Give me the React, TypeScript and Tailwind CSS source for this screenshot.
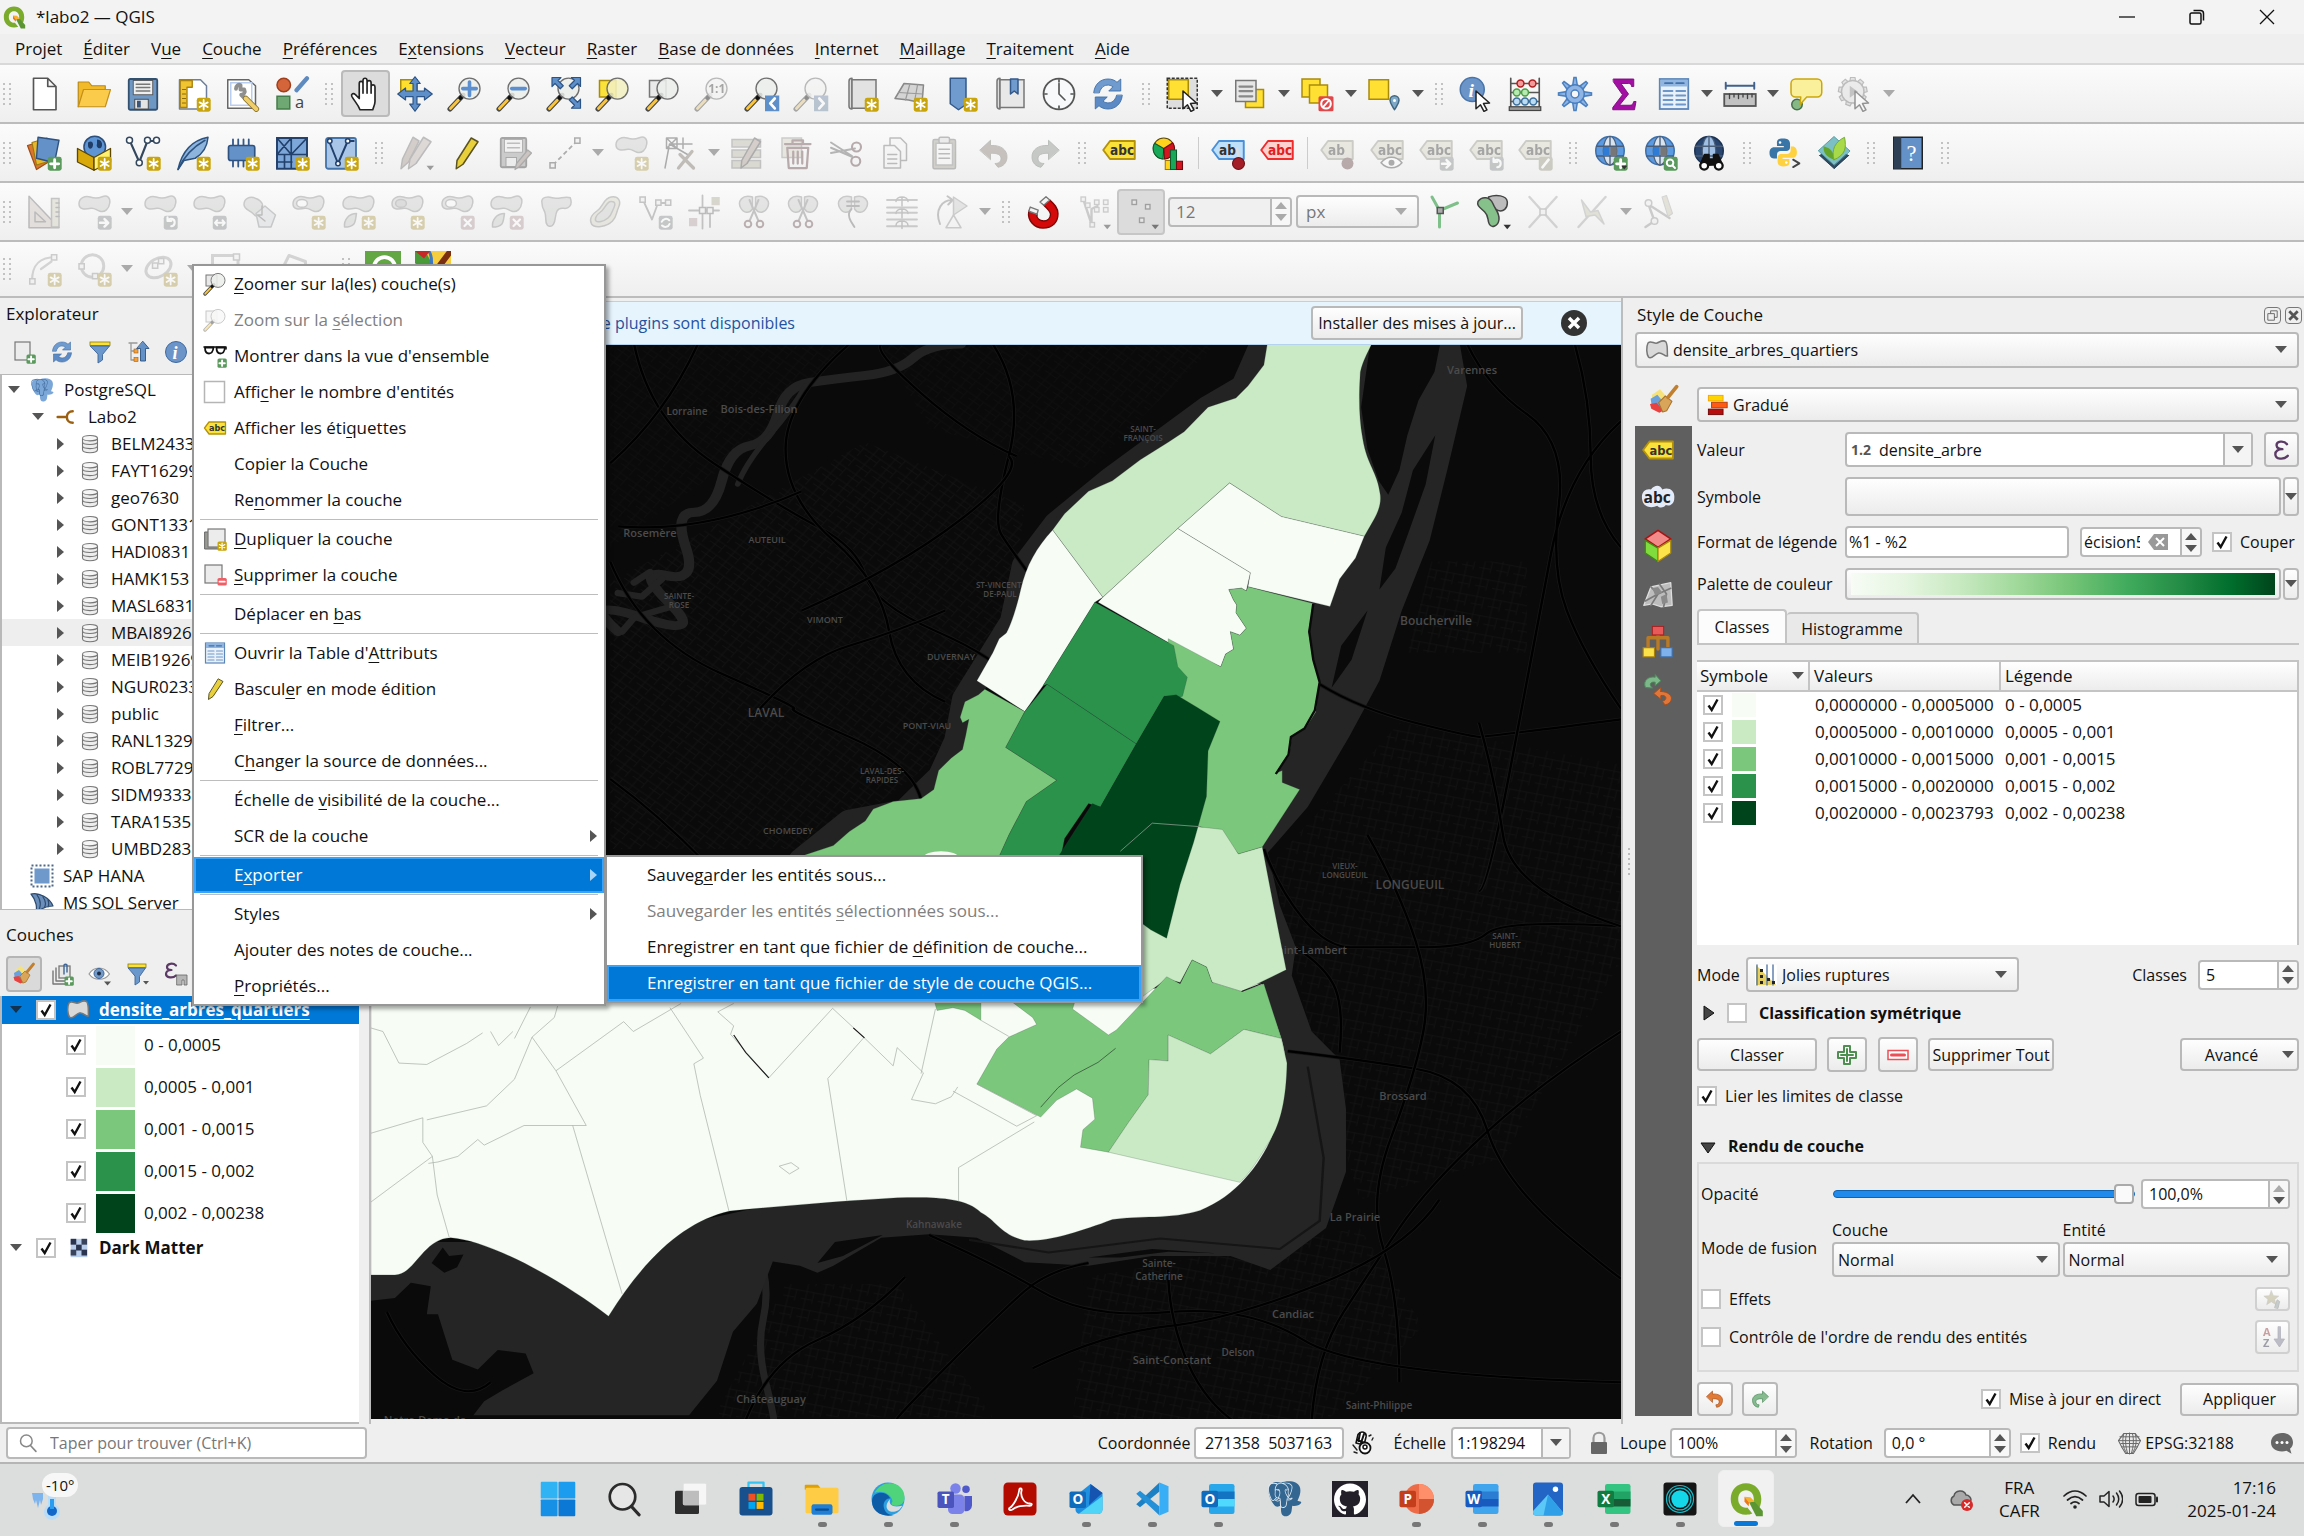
import React, { useId } from "react";
import type { ReactNode } from "react";
import { SiPostgresql, SiGithub } from "react-icons/si";

/* ---------- drawing helpers (24 unit grid) ---------- */

const p = (d: string, fill = "none", stroke = "none", w = 1) => (
  <path d={d} fill={fill} stroke={stroke} strokeWidth={w} strokeLinejoin="round" strokeLinecap="round" />
);
const r = (x: number, y: number, w: number, h: number, fill = "none", stroke = "none", sw = 1, rx = 0) => (
  <rect x={x} y={y} width={w} height={h} fill={fill} stroke={stroke} strokeWidth={sw} rx={rx} />
);
const c = (cx: number, cy: number, rad: number, fill = "none", stroke = "none", sw = 1) => (
  <circle cx={cx} cy={cy} r={rad} fill={fill} stroke={stroke} strokeWidth={sw} />
);

const star = (
  <>
    {r(14.5, 14.5, 9.3, 9.3, "#c8a40d", "none", 0, 1.6)}
    {p("M19.1 16v6.3M16.4 17.6l5.4 3.1M16.4 20.7l5.4-3.1", "none", "#fff", 1.2)}
  </>
);
const plusBadge = (
  <>
    {r(14.5, 14.5, 9.3, 9.3, "#5a9a5c", "none", 0, 1.6)}
    {p("M19.1 16.5v5.4M16.4 19.2h5.4", "none", "#fff", 1.9)}
  </>
);
const grayBadge = (inner: ReactNode, fill = "#8b9296") => (
  <>
    {r(14.5, 14.5, 9.3, 9.3, fill, "none", 0, 1.6)}
    {inner}
  </>
);
const handle = (
  <>
    {p("M10.5 13L2 22", "none", "#4a4a4a", 3.4)}
    {p("M7.5 16.2L2.3 21.7", "none", "#fbc53c", 1.9)}
    {p("M11 12.5l-2 2.1", "none", "#111", 2.6)}
  </>
);
const lens = (fill = "#eceeea") => <circle cx="15" cy="8.4" r="7" fill={fill} fillOpacity="0.88" stroke="#6f6f6f" strokeWidth="0.9" />;
const blob = p("M2 6.500C2 2.500 6 1 9.500 2c3.500 1.200 5.500.8 8-.2 3.400-1.300 5.500.6 5 4.200-.5 4-3.300 6.500-6.500 5.500-2.600-.8-3.500-2.500-6-2-4.200.9-8 1-8-3z", "#c9cfc9", "#8f948f", 1);
const label = (fill: string, stroke: string, text: string, color: string) => (
  <>
    {p("M6 4h16.500v12H6L1.500 10z", fill, stroke, 1.3)}
    <text x="6" y="13.2" fontSize="9" fontWeight="700" fill={color} fontFamily="DejaVu Sans Condensed, Open Sans, sans-serif">{text}</text>
  </>
);
const pencil = p("M15.5 2l4.5 2.5L10 19.5 5.5 22.5 6 17z", "#e8cf3c", "#5b5320", 1);
const cursor = p("M12 10l9 8-4 .4 2.3 4.2-2 1L15 19.2l-3 2.6z", "#fff", "#222", 1);
const magIcon = (extra: ReactNode, fill?: string) => (
  <>
    {handle}
    {lens(fill)}
    {extra}
  </>
);
const refresh = (
  <>
    {p("M2.5 11C3 5.5 7 2 12 2c2.5 0 4.5.8 6 2.2L20.5 2v8h-8l2.8-2.8C13 5.5 9.5 5.7 7.8 8 7 9 6.5 10 6.3 11z", "#6f9bcf", "#3f6fa8", 0.6)}
    {p("M21.5 13c-.5 5.500-4.500 9-9.500 9-2.500 0-4.500-.8-6-2.200L3.500 22v-8h8l-2.800 2.800c2.300 1.700 5.800 1.500 7.500-.8.8-1 1.300-2 1.500-3z", "#5c8ac4", "#3f6fa8", 0.6)}
  </>
);
const globe = (dark = false) => (
  <>
    {c(12, 10.5, 9.5, dark ? "#27456e" : "#5b9ae0", dark ? "#1c3252" : "#3d70ad")}
    <ellipse cx="12" cy="10.5" rx="4.5" ry="9.5" fill={dark ? "#9fc0e4" : "#d9e3ee"} stroke="#4a5e78" strokeWidth="0.8" />
    {p("M12 1v19M3 7.500h18M3 14h18", "none", "#4a5e78", 0.9)}
    {!dark && r(7.5, 8, 4, 6, "#2f7cd6")}
    {!dark && r(12.5, 8, 4, 6, "#777")}
  </>
);
const book = p("M4 3.5C4 2 5 1.5 6 1.5V22c-1 0-2-.5-2-1.800z", "#ddd", "#777", 1);

const qgisLogo = (
  <>
    <path d="M12 1.5C6 1.5 1.8 6 1.8 12S6 22.5 12 22.5c1.700 0 3-.3 4.200-.8l-3.300-4c-.3.100-.6.100-.9.100-3.200 0-5.200-2.600-5.200-5.800S8.8 6.2 12 6.2s5.200 2.600 5.200 5.800c0 .7-.1 1.400-.3 2l4 3.800c.9-1.700 1.300-3.700 1.300-5.800 0-6-4.200-10.500-10.200-10.500z" fill="#7aab2a" />
    {p("M14 14.2l3.8-.4 5.4 6.2v3.500h-4.400z", "#5c9632")}
    {p("M11 10.5l4 .3 2.8 3-3.8.4z", "#f5b02e")}
    {p("M11 10.5l3 3.700-.2 2.600-2.800-3z", "#ee7913")}
  </>
);

const brush = (
  <>
    {p("M3 8l6-4 7 8-8 9-5-3z", "#f7e27a")}
    {p("M2 11l5-3 5 6-3 4-6 0z", "#6aa0dc")}
    {p("M1.5 15l5-1 5 6-3 1.500-6-3z", "#e8413f")}
    {p("M8 14l5-5 5 4-4 7-3 1z", "#d8a55a", "#a8742c", 0.8)}
    {p("M15 10l6.500-8", "none", "#c08030", 2.8)}
  </>
);

const ICONS: Record<string, ReactNode> = {
  page: p("M5 1.500h9.500L20 7v15.500H5zM14.500 1.500V7H20", "#fff", "#555", 1.1),
  folder: (
    <>
      {p("M1.500 20.500V4h7l2 2.500h9V10", "#f2b928", "#b98a16", 0.8)}
      {p("M1.500 20.500L5 9h18l-3.500 11.500z", "#fbcb4b", "#c4901a", 0.8)}
    </>
  ),
  save: (
    <>
      {r(2.5, 2, 19, 20.5, "#6e97c4", "#33506f", 1.2, 1)}
      {r(5.5, 3, 13, 9.5, "#eee", "#555", 0.6)}
      {p("M7.500 5.500h9M7.500 7.700h9M7.500 10h9", "none", "#777", 1)}
      {r(6.5, 15.5, 9, 6.5, "#e4e4e4", "#444", 0.6)}
      {r(8, 16.5, 2.5, 4.5, "#3a567a")}
    </>
  ),
  layout: (
    <>
      {p("M3 2.500h14l4 4V22H3z", "#fff", "#6d7f9c")}
      {p("M3.500 3h8v4.500H8V21H3.500z", "#f0c330", "#a8810f", 0.9)}
      {p("M5 9h2M5 12h2M5 15h2M5 18h2", "none", "#8a6a0b", 0.8)}
      {star}
    </>
  ),
  wrench: (
    <>
      {p("M2.500 2.500h14l4.500 4V21.500H2.500z", "#fff", "#666")}
      {r(4.5, 4.5, 14, 15, "none", "#b8cdf0", 1)}
      {p("M8 8.500c0-2 1.500-3 3-2.500v3h2.500c1 2-.5 3.500-2 3.500l4 4", "none", "#8f8f8f", 2.6)}
      {p("M14.500 15l7 7", "none", "#8a7430", 3.8)}
      {p("M14.500 15l7 7", "none", "#f0cf6a", 2.6)}
    </>
  ),
  styles: (
    <>
      {c(6.5, 6, 4.5, "#d4653b", "#9f3f1c")}
      {p("M15 9.500l7-8", "none", "#5e8bbf", 2.8)}
      {r(2, 13.5, 8.5, 8.5, "#6fa873", "#447d49")}
      <text x="14" y="21.5" fontSize="11" fill="#444" fontFamily="Open Sans, sans-serif">a</text>
    </>
  ),
  hand: p("M8 22.500c-1.500-4-4-6-5.500-9-.6-1.500 1.200-2.400 2.300-1.200L7.500 15V5c0-1.900 2.400-1.900 2.500 0V3c.1-2 2.600-2 2.700 0v1.500c.1-1.900 2.600-1.900 2.700 0V7c.3-1.600 2.600-1.400 2.600.3V17c0 2-1 3.500-1.500 5.500zM10 5v6.500M12.700 4.500v7M15.400 6.500v5", "#fff", "#222", 1.1),
  pan: (
    <>
      {r(2.5, 2.5, 11, 11, "#ffdf2e", "#a98b0c")}
      {p("M12 .5l3.500 4.500H13.300v5h5V8L23.500 12 18.300 16v-2.300h-5v5h2.200L12 23.500 8.500 18.700h2.200v-5h-5V16L.5 12 5.700 8v2h5V5H8.500z", "#5f8fc9", "#2d5486", 0.8)}
    </>
  ),
  zoomIn: magIcon(p("M15 4v9M10.500 8.400h9", "none", "#5b8fd0", 2.4)),
  zoomOut: magIcon(p("M10.500 8.400h9", "none", "#5b8fd0", 2.4)),
  zoomFull: (
    <>
      {magIcon(null)}
      {p("M4 1h6L8 3l3.500 3.500-2 2L6 5 4 7zM23 1v6l-2-2-3.500 3.500-2-2L19 3l-2-2zM23 21.500h-6l2-2-3.500-3.500 2-2L21 17.500l2-2z", "#5f8fc9", "#2d5486", 0.8)}
    </>
  ),
  zoomSel: (
    <>
      {r(3, 3, 11, 11, "#fbe23a", "#a98b0c")}
      {magIcon(null, "#f2f0c0")}
    </>
  ),
  zoomLayer: (
    <>
      {r(3, 3, 11, 11, "#e9e9e9", "#777")}
      {magIcon(null)}
    </>
  ),
  zoomNative: (
    <>
      {magIcon(null)}
      <text x="9.5" y="11.5" fontSize="8" fontWeight="700" fill="#444" fontFamily="Open Sans, sans-serif">1:1</text>
    </>
  ),
  zoomLast: (
    <>
      {magIcon(null)}
      {r(14, 13, 9.5, 10.5, "#5f8fc9")}
      {p("M20.500 15l-3 3.300 3 3.300", "none", "#fff", 1.8)}
    </>
  ),
  zoomNext: (
    <>
      {magIcon(null)}
      {r(14, 13, 9.5, 10.5, "#5f8fc9")}
      {p("M17.500 15l3 3.300-3 3.300", "none", "#fff", 1.8)}
    </>
  ),
  newMap: (
    <>
      {book}
      {r(6, 2.5, 16, 19, "#e2e2e2", "#777")}
      {star}
    </>
  ),
  map3d: (
    <>
      {p("M2 15L8 5l13 1-1 12-9-2z", "#d4d4d4", "#888")}
      {p("M4.500 11l16 1M12 5l-3 11M17 6l-2 11", "none", "#999", 0.8)}
      {star}
    </>
  ),
  bookmarkNew: (
    <>
      {p("M5.500 1.500h10.500V19l-5 3.500-5.500-4z", "#6f9bcf", "#33588a")}
      {star}
    </>
  ),
  bookmarks: (
    <>
      {book}
      {r(6, 2.5, 16, 18.5, "#e8e8e8", "#777")}
      {p("M13 2h5v10l-2.500-2-2.500 2z", "#6f9bcf", "#33588a")}
    </>
  ),
  clock: (
    <>
      {c(12, 12, 10.3, "#f7f9fb", "#555", 1.2)}
      {p("M12 5v7l4 4M12 2.500v1.500M12 20v1.500M2.500 12H4M20 12h1.500", "none", "#555", 1.1)}
    </>
  ),
  refresh,
  select: (
    <>
      <rect x="1.5" y="1.5" width="20" height="20" fill="#dedede" stroke="#333" strokeWidth="1" strokeDasharray="2 1" />
      {r(2.5, 2.5, 13, 13, "#ffe033", "#a98b0c")}
      {cursor}
    </>
  ),
  form: (
    <>
      {r(9, 9, 12, 12, "#ffe033", "#a98b0c")}
      {r(2.5, 3, 13.5, 14, "#e6e6e6", "#777")}
      {p("M5 7h8.500M5 10h8.500M5 13.500h8.500", "none", "#888", 1.5)}
    </>
  ),
  deselect: (
    <>
      {r(2, 2, 12, 12, "#ffe033", "#a98b0c")}
      {r(7, 6, 12, 12, "#ffe033", "#a98b0c")}
      {r(13, 13.5, 10, 10, "#e0474a", "none", 0, 1)}
      {c(18, 18.5, 3.2, "none", "#fff", 1.4)}
      {p("M16 20.700l4-4.400", "none", "#fff", 1.2)}
    </>
  ),
  selectLoc: (
    <>
      {r(2, 2.5, 13, 13, "#ffe033", "#a98b0c")}
      {p("M19 22.500c-2-3.500-3-4.500-3-6.300a3 3 0 0 1 6 0c0 1.800-1 2.800-3 6.300z", "#7fa9c6", "#3f6782")}
      {c(19, 16.3, 1, "#fff")}
    </>
  ),
  identify: (
    <>
      {c(9.5, 9, 8, "#6b95c9", "#4a75aa")}
      <text x="7" y="14" fontSize="13" fontStyle="italic" fontWeight="700" fill="#fff" fontFamily="Liberation Serif, serif">i</text>
      {cursor}
    </>
  ),
  abacus: (
    <>
      {p("M2.500 1.500v20M21.500 1.500v20M2.500 5h19M2.500 11h19M2.500 17h19", "none", "#555", 1.1)}
      {r(1.5, 20.5, 21, 2.5, "#999", "#444", 0.8)}
      {[9, 17].map((x) => <circle key={x} cx={x} cy="5" r="2.3" fill="#f39a9a" stroke="#b02020" />)}
      {[6.5, 12].map((x) => <circle key={x} cx={x} cy="11" r="2.3" fill="#b6eab0" stroke="#4d9d48" />)}
      {[6.5, 12, 17.5].map((x) => <circle key={x} cx={x} cy="17" r="2.3" fill="#bcdcf3" stroke="#3b6f9c" />)}
    </>
  ),
  gear: (
    <>
      {[0, 45, 90, 135, 180, 225, 270, 315].map((a) => (
        <path key={a} d="M10.500 6L11.300 1h1.400L13.500 6z" fill="#8db4e4" stroke="#4a7fc0" strokeWidth="1" transform={`rotate(${a} 12 12)`} />
      ))}
      {c(12, 12, 6.2, "#8db4e4", "#4a7fc0")}
      {c(12, 12, 2.6, "#f6f6f6", "#4a7fc0")}
    </>
  ),
  sigma: p("M5 2h13.500v5h-1.500c0-1.500-.8-2-2-2H10l5 7-6 7.500h7c1.500 0 2-.8 2.500-2.500H20L19 22.500H4.500V21L11 12.500 5 4z", "#a30ea3", "#7a0a7a", 0.6),
  table: (
    <>
      {r(2.5, 2, 19, 20, "#e9f1fa", "#5c86b8", 1.2)}
      {r(3, 2.5, 18, 4.5, "#8fb5e0")}
      {p("M5 10h6M13.500 10h6M5 13h6M13.500 13h6M5 16h6M13.500 16h6M5 19h6M13.500 19h6", "none", "#6d97c8", 1.2)}
      {p("M6 4.800h5M13.500 4.800h5", "none", "#4272aa", 1.2)}
    </>
  ),
  ruler: (
    <>
      {p("M2.500 6.500h19M2.500 4.500v4M21.500 4.500v4", "none", "#41618a", 1.3)}
      {r(1.5, 12, 21, 8, "#c2c2c2", "#555", 1.2)}
      {p("M5 12v3M8 12v2M11 12v3M14 12v2M17 12v3M20 12v2", "none", "#444", 0.9)}
    </>
  ),
  tip: (
    <>
      {c(6, 19, 3.5, "#86b886", "#45704a")}
      {p("M5 2h14.500a3 3 0 0 1 3 3v6a3 3 0 0 1-3 3h-7L8 19l.5-5H5a3 3 0 0 1-3-3V5a3 3 0 0 1 3-3z", "#faef9a", "#c9a70d", 1)}
    </>
  ),
  action: (
    <>
      {[0, 40, 80, 120, 160, 200, 240, 280, 320].map((a) => (
        <path key={a} d="M8.500 4L9 1h3l.5 3z" fill="#ccc" stroke="#777" strokeWidth="0.8" transform={`rotate(${a} 10.5 10.5)`} />
      ))}
      {c(10.5, 10.5, 7.5, "#ddd", "#777")}
      {p("M8.500 6.500l5.500 4-5.500 4z", "#888")}
      {cursor}
    </>
  ),
  dataSource: (
    <>
      {p("M1 7l10-3 4 14-8 5z", "#d9762f", "#9c4d16", 0.8)}
      {p("M4 5l10-3 3 15-10 3z", "#e8b82c", "#9c7a10", 0.8)}
      {p("M8 1.500l14 2-3 15-12-3z", "#6391c8", "#2d527f", 0.9)}
      {plusBadge}
    </>
  ),
  geopackage: (
    <>
      {c(12.5, 8, 7.2, "#5e95d4", "#2c4f7d")}
      {p("M8 5c3-2 4 1 3 3s-3 1-3-1zM14 3c3 0 4 3 3 5s-4 0-3-2z", "#1f3d66")}
      {p("M1 9l11 6v8.500L1 18z", "#d9a90b", "#5c4804", 0.9)}
      {p("M23 9l-11 6v8.500L23 18z", "#fff16e", "#5c4804", 0.9)}
      {star}
    </>
  ),
  vNew: (
    <>
      {p("M3.500 4.500L9.500 18 15 4h5", "none", "#33475e", 1.4)}
      {c(3, 3.5, 2, "#fff", "#33475e")}
      {c(15, 3.5, 2, "#fff", "#33475e")}
      {c(21, 3.5, 2, "#fff", "#33475e")}
      {c(9.5, 18.5, 2, "#fff", "#33475e")}
      {star}
    </>
  ),
  feather: (
    <>
      {p("M2 23C4 14 9 4 22 1.500c-.5 6-3.500 11-8.500 14L6 17z", "#8db4dd", "#2c5280", 1)}
      {p("M2 23C6 14 12 8 20 3.500", "none", "#2c5280", 1)}
      {star}
    </>
  ),
  chip: (
    <>
      {p("M6 3v18M9.500 3v18M13 3v18M16.500 3v18", "none", "#33588a", 1.2)}
      {r(3, 7, 17.5, 10, "#6391c8", "#2d527f", 1.1, 1.5)}
      {star}
    </>
  ),
  mesh: (
    <>
      {r(2, 2, 20, 20.5, "#7da7d8", "#21406b", 1.3)}
      {p("M2 13h20M11.500 2v20M2 2l9.500 11M11.500 2L2 13M11.500 13L22 2M2 18h10M7 13v9", "none", "#21406b", 1.1)}
      {star}
    </>
  ),
  vMesh: (
    <>
      {r(2, 2, 20, 20.5, "#a9c6e8", "#4373a8", 1.2, 1.5)}
      {p("M4 4l6 15 6.500-15h4", "none", "#21406b", 1.3)}
      {c(4.5, 4, 1.5, "#fff", "#21406b")}
      {c(16.5, 4, 1.5, "#fff", "#21406b")}
      {c(10, 19, 1.5, "#fff", "#21406b")}
      {star}
    </>
  ),
  pencils: (
    <>
      {p("M10 1.500l4 2.500L7 18l-5 4.500L3 16z", "#b59a8c", "#777")}
      {p("M17 1.500l5 3L12 19l-5 3.500L8 16z", "#c9b3a8", "#777")}
      {p("M19 20.500h5l-2.500 3z", "#333")}
    </>
  ),
  pencil,
  saveEdit: (
    <>
      {r(2.5, 2, 17, 19.5, "#9a9a9a", "#444", 1.2, 1)}
      {r(5, 3, 12, 8.5, "#eee", "#555", 0.6)}
      {p("M7 5.500h8M7 8.500h8", "none", "#777", 1)}
      {r(6, 15, 7, 6, "#e4e4e4", "#444", 0.6)}
      {p("M20.500 10l2.500 2-8 9-3 2 1-4z", "#a88778", "#555", 0.8)}
    </>
  ),
  segment: (
    <>
      <path d="M4 20L20 4" stroke="#555" strokeWidth="1.2" strokeDasharray="3 2" />
      {r(2, 18.5, 3.5, 3.5, "#eee", "#555")}
      {r(18.5, 2, 3.5, 3.5, "#eee", "#555")}
    </>
  ),
  blobNew: (
    <>
      {blob}
      {star}
    </>
  ),
  vertexTool: (
    <>
      {p("M2 22L5 6h15M5 6l12 7M3 2h7v7H3zM3 2l7 7M10 2l-7 7M14 2v7", "none", "#555", 1)}
      {p("M20 11l-9 11M12 13l9 9", "none", "#8a7a66", 2.2)}
    </>
  ),
  multiEdit: (
    <>
      {r(2, 3, 19, 5, "#bdbb9c", "#888")}
      {r(2, 10, 19, 5, "#bdbb9c", "#888")}
      {r(2, 17, 19, 5, "#bdbb9c", "#888")}
      {p("M17 2l4 2.500L12 19l-4 3 .5-5z", "#b99a8c", "#555")}
    </>
  ),
  trash: (
    <>
      {r(2, 2, 13, 13, "#d9d4b4", "#999")}
      {p("M4 6h17M9 6V3.500h7V6M5.500 8.500h14L18.500 22h-12zM9.500 11v8M12.500 11v8M15.500 11v8", "none", "#8a4a52", 1.5)}
    </>
  ),
  cut: (
    <>
      {p("M2 5l14 9M2 12l16-3M2 8.500l14 6", "none", "#666", 1.3)}
      {c(19, 8, 3, "none", "#7d4a52", 1.4)}
      {c(18.5, 17.5, 3, "none", "#7d4a52", 1.4)}
    </>
  ),
  copy: (
    <>
      {p("M8 2h7l4 4v11H8z", "#f4f4f4", "#777")}
      {p("M4 7h7l4 4v11H4zM6.500 13h6M6.500 16h6M6.500 19h6", "#f4f4f4", "#777")}
    </>
  ),
  paste: (
    <>
      {r(4, 3, 15, 19.5, "#aaa68c", "#777", 1, 1)}
      {r(6, 5.5, 11, 14.5, "#f6f6f6", "#888")}
      {r(8, 1.5, 7, 4, "#ddd", "#777", 1, 1)}
      {p("M8 9.500h7M8 12.500h7M8 15.500h7", "none", "#777")}
    </>
  ),
  undo: p("M2 10l7-6.500V7c7-.5 11 3 11 7.500 0 4-2.500 6.500-6 7l-2-2.500c3 0 4-1.500 4-3.500 0-2.300-2.500-3.500-7-3.300v4z", "#9a8272", "#776", 0.6),
  redo: p("M22 10l-7-6.500V7C8 6.500 4 10 4 14.500c0 4 2.500 6.500 6 7l2-2.500c-3 0-4-1.500-4-3.500 0-2.300 2.500-3.500 7-3.300v4z", "#8a958a", "#676", 0.6),
  labelYellow: label("#fbe23a", "#b5920b", "abc", "#333"),
  labelMid: <g transform="translate(0 2)">{label("#fbe23a", "#b5920b", "abc", "#333")}</g>,
  diagram: (
    <>
      {c(8.5, 9, 7, "#ffd21e", "#5a4a10", 0.7)}
      {p("M8.500 9L2.400 5.500A7 7 0 0 0 8 16z", "#18a858", "#0c5c30", 0.7)}
      {p("M8.500 9l6-3.800A7 7 0 0 1 9 16z", "#d4141e", "#6d0a10", 0.7)}
      {r(9.5, 17, 4, 6, "#ffd21e", "#9c7a0a", 0.7)}
      {r(13, 10, 4, 13, "#18a858", "#0c5c30", 0.7)}
      {r(17, 17.5, 4, 5.5, "#d4141e", "#6d0a10", 0.7)}
    </>
  ),
  labelPin: (
    <>
      {label("#bfe0fa", "#4a90d9", "ab", "#333")}
      {p("M18 9l1.500 8", "none", "#ddd", 1.5)}
      {c(19, 19, 4, "#a31e26", "#6d1016", 0.7)}
    </>
  ),
  labelRed: label("#ffd0d0", "#ef2b2b", "abc", "#e02020"),
  labelGrayPin: (
    <>
      {label("#d9d6b8", "#9c9a80", "ab", "#444")}
      {c(19, 19, 4, "#8a4a52")}
    </>
  ),
  labelEye: (
    <>
      {label("#d9d6b8", "#9c9a80", "abc", "#444")}
      {p("M8 18.500c4-5 10-5 14 0-4 4.500-10 4.500-14 0z", "#fff", "#555")}
      {c(15, 18.5, 2, "#555")}
    </>
  ),
  labelMove: (
    <>
      {label("#d9d6b8", "#9c9a80", "abc", "#444")}
      {grayBadge(p("M16 19.200h5M19 16.700l2.500 2.500-2.500 2.500", "none", "#fff", 1.6))}
    </>
  ),
  labelRotate: (
    <>
      {label("#d9d6b8", "#9c9a80", "abc", "#444")}
      {grayBadge(p("M17 18a2.500 2.500 0 1 1 2.500 3.500M17 15.500V18h2.500", "none", "#fff", 1.4))}
    </>
  ),
  labelEdit: (
    <>
      {label("#d9d6b8", "#9c9a80", "abc", "#444")}
      {grayBadge(p("M21 16.500l-4 5", "none", "#fff", 1.8), "#a09c78")}
    </>
  ),
  webAdd: (
    <>
      {globe()}
      {plusBadge}
      {p("M19.500 20.500h4l-2 2.500z", "#333")}
    </>
  ),
  webSearch: (
    <>
      {globe()}
      {r(14.5, 14.5, 9.3, 9.3, "#5a9a5c", "none", 0, 1.6)}
      {c(18.7, 18.5, 2.2, "none", "#fff", 1.3)}
      {p("M20.300 20.300l1.700 1.700", "none", "#fff", 1.3)}
    </>
  ),
  webBino: (
    <>
      {globe(true)}
      {p("M9 13h3v3h3v-3h3l3 7H6z", "#111", "#111")}
      {c(8.8, 20.5, 2.6, "#fff", "#111", 1.5)}
      {c(18.5, 20.5, 2.6, "#fff", "#111", 1.5)}
    </>
  ),
  python: (
    <g transform="translate(1.5 1.5) scale(.83)">
      {p("M12 1c-5 0-5 2-5 4v2h5.500v1H5c-3 0-4 2-4 4.500S2 17 4.500 17H7v-3c0-2 1.500-3 3-3h4.500c1.700 0 3-1 3-3V5c0-3-2.500-4-5.500-4z", "#3a75a8")}
      {p("M12 23.500c5 0 5-2 5-4v-2h-5.500v-1H19c3 0 4-2 4-4.500S22 7.500 19.500 7.500H18v3c0 2-1.500 3-3 3h-4.500c-1.700 0-3 1-3 3v3c0 3 2 4 4.500 4z", "#fdd13f")}
      {c(9.5, 4.3, 1, "#fff")}
      {c(14.5, 20.3, 1, "#fff")}
      {p("M20 18l5 3-5 3", "none", "#444", 1.5)}
    </g>
  ),
  leaf: (
    <>
      {p("M12 23L1.500 13.500 4 12l8 7 8-7 2.500 1.500z", "#2f4a5e", "#fff", 0.6)}
      {p("M12 20L1.500 10.500 12 1l10.500 9.500z", "#7cbfc4", "#4f9aa0", 0.6)}
      {p("M12 16.500C5 14 5 10 5 7.500c4 1 7 3 7 9z", "#63a52b")}
      {p("M12 16.500c-2-7 1-12 7-15 1.500 7 .5 12-7 15z", "#a7d94a", "#6fa82a", 0.6)}
    </>
  ),
  help: (
    <>
      {r(2.5, 1.5, 19, 21, "#6391c8", "#222", 1)}
      {r(2.5, 1.5, 5, 21, "#2c3f55")}
      <text x="11" y="17.5" fontSize="15" fill="#fff" fontFamily="Liberation Serif, serif">?</text>
    </>
  ),
  setSquare: (
    <>
      {p("M2 1.500V22.500h20zM6 12v6.500h7z", "#d6c4ba", "#777", 1)}
      {r(17, 3, 5, 19, "#d4d2b4", "#888")}
      {p("M20 6h2M20 9h2M20 12h2M20 15h2", "none", "#777")}
    </>
  ),
  blobMove: (
    <>
      {blob}
      {grayBadge(p("M16 19.200h5M19 16.700l2.500 2.500-2.500 2.500", "none", "#fff", 1.6))}
    </>
  ),
  blobRotate: (
    <>
      {blob}
      {grayBadge(p("M17 18a2.500 2.500 0 1 1 2.500 3.500M17 15.500V18h2.500", "none", "#fff", 1.4))}
    </>
  ),
  blobScale: (
    <>
      {blob}
      {grayBadge(p("M16 19.200h6.500M17.500 17.500L16 19.200l1.500 1.700M21 17.500l1.500 1.700-1.500 1.700", "none", "#fff", 1.3))}
    </>
  ),
  simplify: (
    <>
      {p("M2 7c0-4 4-6 8-4 4 1.500 6 5 3 9s-3 3-5 1C5 10.500 2 10 2 7z", "#c9cfc9", "#8f948f")}
      {p("M10 13l6-5 7 6-3 8h-8z", "#d5dade", "#8f9498")}
      {p("M14 8v6h-3l5 4", "none", "#777", 0.9)}
    </>
  ),
  ringAdd: (
    <>
      {blob}
      <ellipse cx="8" cy="6.3" rx="3.6" ry="2.6" fill="#fafafa" stroke="#8f948f" />
      {star}
    </>
  ),
  partAdd: (
    <>
      {blob}
      {p("M3 22c-.5-5 3-9 8-9-1 5 0 9-8 9z", "#c9cfc9", "#8f948f")}
      {star}
    </>
  ),
  ringFill: (
    <>
      {blob}
      <ellipse cx="8" cy="6.3" rx="3.6" ry="2.6" fill="#b9bdb9" stroke="#8f948f" />
      {star}
    </>
  ),
  ringDel: (
    <>
      {blob}
      <ellipse cx="8" cy="6.3" rx="3.6" ry="2.6" fill="#fafafa" stroke="#8f948f" />
      {grayBadge(p("M17 17l4.300 4.300M21.300 17L17 21.300", "none", "#fff", 1.5), "#c99aa0")}
    </>
  ),
  partDel: (
    <>
      {blob}
      {p("M3 22c-.5-5 3-9 8-9-1 5 0 9-8 9z", "#c9cfc9", "#8f948f")}
      {grayBadge(p("M17 17l4.300 4.300M21.300 17L17 21.300", "none", "#fff", 1.5), "#c99aa0")}
    </>
  ),
  reshape: p("M2.500 5c0-3 4-3.500 7-2.500 4 1.300 9-1.500 12 0C23.500 8 20 10 17 9.500c-4.500-.5-5 3-5.500 6.500-.3 3-1.500 6-4 5.500C4 20.500 6 16 4.500 12 3 9.500 2.500 8 2.500 5z", "#c9cfc9", "#8f948f"),
  offset: (
    <>
      {p("M16 2c5-1 7 3 5 7-1.500 3-1 6-4 9-4 4-12 5-14 2-2-3.500 1-7 4-9 4-3 4-8 9-9z", "#d9d6b8", "#8f948f")}
      {p("M16 5c3 0 3 2 2 4-1.500 3-1.500 5-4 7-3 2.500-7 3-8 2s0-4 3-6 4-7 7-7z", "#c9cfc9", "#8f948f")}
    </>
  ),
  vRotate: (
    <>
      {p("M4 4l6 13L14 6h6", "none", "#888", 1.2)}
      {r(2, 2, 3.5, 3.5, "#eee", "#888")}
      {r(12.5, 4, 3.5, 3.5, "#eee", "#888")}
      {r(19, 4, 3.5, 3.5, "#eee", "#888")}
      {grayBadge(p("M16.500 18.500a3 3 0 0 1 5-1M21.700 20a3 3 0 0 1-5 1", "none", "#fff", 1.4))}
    </>
  ),
  mergeV: (
    <>
      {p("M11 1v22M2 11h20M16 11v11", "none", "#888", 1.2)}
      {r(9, 9, 4, 4, "#eee", "#777")}
      {r(14, 9, 4, 4, "#eee", "#777")}
      {r(17, 2, 5.5, 5.5, "#b5b08a")}
      {r(2, 16, 5.5, 5.5, "#c9a0a6")}
    </>
  ),
  split: (
    <>
      {p("M11 2C4 0 1 5 3 9s6 4 8 1zM13 2c7-2 10 3 8 7s-6 4-8 1z", "#c9cfc9", "#8f948f")}
      {p("M9 4l6 14M15 4L9 18", "none", "#888", 1.3)}
      {c(8, 20, 2.2, "none", "#8a5a60", 1.3)}
      {c(16, 20, 2.2, "none", "#8a5a60", 1.3)}
    </>
  ),
  mergeF: (
    <>
      {p("M11 2C4 0 1 5 3 9s6 4 8 1zM13 2c7-2 10 3 8 7s-6 4-8 1z", "#c9cfc9", "#8f948f")}
      {p("M8 5h8M8 8h8M11 10c-4 4 0 9 2 12", "none", "#777", 1.2)}
    </>
  ),
  mergeA: (
    <>
      {p("M2 4h20M2 9h20M2 12.500h20M2 17h20M2 21.500h20", "none", "#999", 1.2)}
      {p("M8 5c0-4 8-4 8 0M8 13c0-4 8-4 8 0M8 21c0-4 8-4 8 0M12 2v6M12 10v6M12 18v5", "none", "#888", 1)}
    </>
  ),
  rotSym: (
    <>
      {p("M4 20C0 10 6 4 12 4M9 1.500L12.500 4 9.500 7", "none", "#888", 1.3)}
      {p("M13 2l9 6-9 6z", "#c9cfc9", "#999")}
      {p("M13 14l5 8.500H8z", "#f4f4f4", "#999")}
    </>
  ),
  magnet: (
    <>
      {p("M2.500 11.500c-1 6 3.500 11.200 9.500 11.200 6.500 0 10-4 10-9.500 0-4-2.500-6.500-5.500-9.200l-4 3.500c2.500 2.200 4.500 4 4.500 6.200 0 2.500-2 4.300-4.500 4.300-3 0-5-2-4.500-4.500z", "#d40a0a", "#7d0606", 0.9)}
      {p("M12.500 7.500l4-3.500-2.500-2.200-4 3.600zM2.500 11.500L8 13.500l.8-2.800-5.300-2z", "#f3f3f3", "#777", 0.9)}
    </>
  ),
  snapV: (
    <>
      {p("M6 5l5 15V10l4-2", "none", "#999", 1.6)}
      {[[4, 2], [7, 6], [13, 4], [19, 4], [13, 9], [19, 9], [10, 19]].map(([x, y]) => (
        <rect key={`${x}-${y}`} x={x} y={y} width="3" height="3" fill="#eee" stroke="#999" strokeWidth="0.9" />
      ))}
      {p("M19 20.500h5l-2.500 3z", "#333")}
    </>
  ),
  snapD: (
    <>
      {[[6, 4], [15, 7], [11, 16]].map(([x, y]) => (
        <rect key={x} x={x} y={y} width="3" height="3" fill="#eee" stroke="#777" strokeWidth="0.9" />
      ))}
      {p("M19 20.500h5l-2.500 3z", "#333")}
    </>
  ),
  topo: (
    <>
      {p("M4 2l5 9 12-5M9 11v11", "none", "#7fc08a", 2)}
      {r(7.5, 9, 4, 4, "#aaa", "#555")}
    </>
  ),
  topoBlob: (
    <>
      {p("M9 2c5-2 12-1 12.500 3 .5 5-3 7-6 6-4-2-5 0-7 0z", "#bcbcbc", "#444")}
      {p("M2 5c3-4 8-3 10 1.500 1.500 4 4.500 6 4 10.500s-5 6-6.500 3 0-5-3-8-5.500-4-4.500-7z", "#86c08a", "#444")}
      {p("M19 20.500h5l-2.500 3z", "#333")}
    </>
  ),
  xSnap: (
    <>
      {p("M3 2l18 20M21 2L3 22", "none", "#aaa", 1.6)}
      {r(10, 10, 4, 4, "#eee", "#999")}
    </>
  ),
  xSnap2: (
    <>
      {p("M21 2L3 22", "none", "#aaa", 1.6)}
      {p("M5 4l6 8 5-1 4 9-6-6-6 1z", "#cfc9a0", "#aaa", 1)}
    </>
  ),
  trace: (
    <>
      {p("M3 22l6-4-4-11 14 9", "none", "#999", 1.6)}
      {c(5, 6, 2.2, "#eee", "#999")}
      {c(9, 18, 2.2, "#eee", "#999")}
      {p("M14 2l3-1 4 12-3 2z", "#cfc9a0", "#aaa", 0.7)}
    </>
  ),
  arc: (
    <>
      {p("M4 20C4 9 9 4 20 4M10 12l7-5", "none", "#a5aaa5", 1.5)}
      {r(2.5, 18.5, 3.5, 3.5, "#eee", "#999")}
      {r(17, 2.5, 3.5, 3.5, "#eee", "#999")}
      {star}
    </>
  ),
  circle: (
    <>
      {c(11, 10, 7.5, "none", "#a5aaa5", 2)}
      {r(2, 8.5, 3.5, 3.5, "#eee", "#999")}
      {r(11, 15, 3.5, 3.5, "#eee", "#999")}
      {star}
    </>
  ),
  ellipse: (
    <>
      <ellipse cx="11" cy="11" rx="9" ry="6" fill="none" stroke="#a5aaa5" strokeWidth="2" transform="rotate(-30 11 11)" />
      {r(7, 8, 3.5, 3.5, "#eee", "#999")}
      {r(11, 5, 3.5, 3.5, "#eee", "#999")}
      {star}
    </>
  ),
  rectD: (
    <>
      {r(3, 3, 17, 15, "none", "#a5aaa5", 2)}
      {r(17, 2, 4, 4, "#eee", "#999")}
    </>
  ),
  polyD: p("M4 15L10 3l11 4v9L12 22z", "none", "#a5aaa5", 2),
  greenC: (
    <>
      {r(0, 0, 24, 24, "#62a744")}
      {c(13, 11, 7, "none", "#fff", 2.5)}
    </>
  ),
  mapPen: (
    <>
      {r(0, 0, 24, 24, "#f7cf3e")}
      {p("M0 0h7l4 8-5 5-6-5z", "#4b9a3a")}
      {p("M9 0c4 4 0 10 4 16l5 8", "none", "#3c78c4", 2)}
      {p("M0 0l6 5 4-5z", "#c62828")}
      {p("M23 1l-9 12", "none", "#7a3010", 4)}
    </>
  ),
  addLayer: (
    <>
      {r(3, 2, 15, 18, "#ececec", "#777", 1.2)}
      {plusBadge}
    </>
  ),
  funnel: (
    <>
      {r(2, 2, 20, 3.5, "#fbe23a", "#8c7a12", 0.8)}
      {p("M2.500 6h19l-7 8.500V20l-4.500 3v-8.500z", "#6b98cc", "#3d6597", 0.9)}
    </>
  ),
  collapse: (
    <>
      {p("M3 3h8M5 3v17h5M5 11h5", "none", "#999", 1.3)}
      {r(8, 9, 4, 4, "#f4a13c", "#a85c0c", 0.6)}
      {r(8, 17.5, 4, 4, "#f4a13c", "#a85c0c", 0.6)}
      {p("M17 1.500l6 7h-3.500V21h-5V8.500H11z", "#6391c8", "#2d527f", 0.9)}
    </>
  ),
  info: (
    <>
      {c(12, 12, 10.5, "#6b95c9", "#3e69a0")}
      <text x="8.5" y="19" fontSize="18" fontStyle="italic" fontWeight="700" fill="#fff" fontFamily="Liberation Serif, serif">i</text>
    </>
  ),
  conn: p("M2 12h11M20 5c-4 0-7 3-7 7s3 7 7 7", "none", "#9c5f10", 3),
  db: (
    <>
      {p("M3 5v14c0 2 4 3.500 9 3.500s9-1.500 9-3.500V5", "#ededed", "#777", 1.3)}
      {p("M3 9.500c0 2 4 3 9 3s9-1 9-3M3 14.500c0 2 4 3 9 3s9-1 9-3", "none", "#777", 1.3)}
      <ellipse cx="12" cy="5" rx="9" ry="3.2" fill="#f6f6f6" stroke="#777" strokeWidth="1.3" />
    </>
  ),
  hana: (
    <>
      <rect x="1.5" y="1.5" width="21" height="21" fill="none" stroke="#4d6787" strokeWidth="2" strokeDasharray="2 2" />
      {r(4.5, 4.5, 15, 15, "#6f98cb")}
    </>
  ),
  mssql: p("M1 3C9 1 20 7 23 15c-6 0-12 2-18 8C8 17 6 9 1 3zM7 4c4 5 4 10 2 15M13 6c3 4 3 8 1 11M18 9c1 3 1 5 0 7", "#6b8fbb", "#2e4a6e", 1.2),
  brush,
  layerGroup: (
    <>
      {p("M3 9v13h12M6 6v13h12", "none", "#777", 1.4)}
      {r(9, 4, 11, 12, "#e8e8e8", "#777", 1.3)}
      {p("M14 12V3a2 2 0 0 1 3 0v7", "none", "#3d6597", 1.4)}
      {plusBadge}
    </>
  ),
  eye: (
    <>
      {p("M1 12C6 4 16 4 21.500 12c-5 7-15.500 7-20.500 0z", "#fff", "#999", 1.2)}
      {c(11, 11.5, 5, "#7399c6", "#3d6597")}
      {c(11, 11.5, 2, "#1c2c44")}
      {p("M16 19.500h7l-3.500 4z", "#555")}
    </>
  ),
  funnelDrop: (
    <>
      {r(2, 2, 18, 3.5, "#fbe23a", "#8c7a12", 0.8)}
      {p("M2.500 6h17l-6 8.500V20l-4.500 3v-8.500z", "#6b98cc", "#3d6597", 0.9)}
      {p("M17 19h6l-3 3.500z", "#555")}
    </>
  ),
  epsFilter: (
    <>
      {p("M12 3.500C9 .5 3 1.500 3 5c0 2 1.500 3 4.500 3C4 8 2 9.500 2 12c0 4 7 4.500 10 1.500", "none", "#5c3a66", 2.2)}
      {p("M13 13h10v3l0 7h-3v-5h-2v5h-5z", "#b5b5b5", "#666", 0.8)}
    </>
  ),
  epsilon: p("M18 5C14 0 5 1.500 5.500 6.500c.3 3 3 4.500 7 4.500-5 0-8.500 2-8.500 6 0 6 10 7.500 15 2", "none", "#5c3a66", 2.8),
  poly: p("M3 5c3-3 6 1 9 0s6-4 9-1c2 4 1 9 1.500 14-3 1-5-4-9-3-4 1-7 7-10 4-2-3-2.500-10-.5-14z", "#d9d9d9", "#777", 1.5),
  matter: (
    <>
      {r(2, 1, 20, 22, "#b9cdec")}
      {[[2, 1], [15, 1], [8.5, 8], [2, 14], [15, 14]].map(([x, y], i) => (
        <rect key={i} x={x} y={y} width="6.7" height="7" fill={i % 2 ? "#39445c" : "#2b3550"} />
      ))}
    </>
  ),
  glasses: (
    <>
      {p("M1 3h22v2", "none", "#111", 1.6)}
      {p("M2 3.500c0 5 1.500 6 4 6s4-2 4.500-6zM13.500 3.500c0 5 1.500 6 4 6s4-2 4.500-6z", "#fff", "#111", 1.8)}
      {plusBadge}
    </>
  ),
  boxEmpty: r(1.5, 1.5, 20, 21, "#fff", "#b5b5b5", 1.5),
  duplicate: (
    <>
      {p("M2 5h15v17H2z", "#9a9a94", "#666")}
      {r(5, 2, 17, 18, "#ececec", "#777", 1.2)}
      {star}
    </>
  ),
  remove: (
    <>
      {r(2, 2, 17, 18, "#ececec", "#777", 1.2)}
      {r(14.5, 15, 9.3, 7.5, "#ee5f66", "none", 0, 1.6)}
      {p("M16.500 18.700h5.300", "none", "#fff", 1.7)}
    </>
  ),
  labelOutline: (
    <>
      {p("M1 14c-1.500-6 2-9 6-8 3-4 7-3 8 0 5-2 9 1 8.500 6 0 5-4 6-6 5-2 2.500-5 2-6 .5-4 2-9.500 1-10.500-3.500z", "#e6ebfa")}
      <text x="1.8" y="15.3" fontSize="11" fontWeight="700" fill="#222" fontFamily="Open Sans, sans-serif">abc</text>
    </>
  ),
  cube: (
    <>
      {p("M12 1l9 6-9 6-9-6z", "#f28a8a", "#a81414", 1.2)}
      {p("M3 8l9 5.500V23l-9-6z", "#7fdc3c", "#3f8a14", 0.9)}
      {p("M21 8l-9 5.500V23l9-6z", "#fbe24a", "#a88a10", 0.9)}
    </>
  ),
  terrain: (
    <>
      {p("M2 20L7 7l14-3 1 16-8 1-6-2z", "#bdbdbd", "#dedede", 0.9)}
      {p("M7 7l5 5-5 8M13 5l5 7-2 9M21 8l-9 4-9 5", "none", "#7a7a7a", 1.2)}
      {p("M8 8l4-1 3 4-5 2zM14 14l4-2 1 6-4 1z", "#8a8a8a")}
    </>
  ),
  brushes: (
    <>
      {p("M5 16V9h14v7M12 7v10", "none", "#b87a26", 2.4)}
      {r(8, 1, 8, 6, "#e85a5a", "#a82020", 0.7)}
      {r(1.5, 16, 8, 6.5, "#fbe24a", "#a8820c", 0.8)}
      {r(14, 16, 8, 6.5, "#7fb2ec", "#3d70ad", 0.8)}
    </>
  ),
  history: (
    <>
      {p("M3 10c-2-5 3-8 7-7V1l4 4.500L10 9V6.500C7 6 5 8 8 10.500z", "#7db88a", "#4a8a58", 0.7)}
      {p("M14 13V10l-5 4.500 5 4V16c4-1 5 3 1 4l2 2.500c6-1 7-9-3-9.500z", "#e0763a", "#a84d16", 0.7)}
    </>
  ),
  undoO: p("M2 9l7-6.500V6c8-.5 12 3 12 7.500 0 5-3 8-7 8.500l-1-3c3 0 4-2 4-4 0-2.500-3-3.500-8-3.300v4z", "#e07a35", "#a84d16", 0.8),
  redoG: p("M22 9l-7-6.500V6C7 5.500 3 9 3 13.500c0 5 3 8 7 8.500l1-3c-3 0-4-2-4-4 0-2.500 3-3.500 8-3.300v4z", "#86bb90", "#4a8a58", 0.8),
  plusO: p("M9 3h6v6h6v6h-6v6H9v-6H3V9h6zM12 6v12M6 12h12", "#fff", "#4f8f52", 2),
  minusO: (
    <>
      {r(2, 7.5, 20, 9, "#fff", "#ee4f56", 1.5)}
      {p("M5.500 12h13", "none", "#ee4f56", 3)}
    </>
  ),
  jolies: (
    <>
      {r(1, 2, 22, 20, "#fff")}
      {p("M2 22V2l8 8 6 6 6 6z", "#e5cf62")}
      {p("M3 2v20M13 2v20M19 2v20", "none", "#4a6fa0", 1.3)}
      {r(6, 6, 3, 3, "#222")}
      {r(6, 12, 3, 3, "#222")}
      {r(6, 18, 3, 3, "#222")}
      {r(13, 15, 3, 3, "#222")}
      {r(18, 18, 3, 3, "#222")}
    </>
  ),
  gradue: (
    <>
      {r(1.5, 1.5, 16, 6, "#ffd500", "#f5a300")}
      {r(5, 9, 17, 6, "#ff5a14", "#b53a06")}
      {r(1.5, 16.5, 16, 6, "#b80d0d", "#6d0404")}
    </>
  ),
  starFx: (
    <>
      {p("M10 2l2.500 6 6.500.5-5 4 1.600 6.300L10 15.300 4.400 18.800 6 12.500 1 8.500 7.500 8z", "#b5b08a", "#999", 0.6)}
      {p("M14 22l3-9 3 2-2 8z", "#9aa", "#888")}
    </>
  ),
  az: (
    <>
      <text x="2" y="11" fontSize="11" fontWeight="700" fill="#a66" fontFamily="Open Sans, sans-serif">A</text>
      <text x="2" y="22" fontSize="11" fontWeight="700" fill="#667" fontFamily="Open Sans, sans-serif">Z</text>
      {p("M17 2v12h-4l5.500 8 5-8h-4V2z", "#99a", "#889", 0.8)}
    </>
  ),
  satellite: (
    <>
      {p("M7 3.500C10-1 16 1 15 6l-2 8-8-2z", "#fff", "#111", 1.6)}
      {p("M6 9l8 3M9 2l-1.500 8M13 3l-3 9", "none", "#111", 2)}
      {c(14, 17, 5.5, "#fff", "#111", 1.8)}
      {c(14, 16, 2, "#fff", "#111", 1.5)}
      {p("M2 14l4 5M18 5l2-1M21 9l1-2M3 21l3 1", "none", "#222", 1.4)}
    </>
  ),
  lock: (
    <>
      {p("M6.500 11V7c0-7 11-7 11 0v4", "none", "#999", 2.2)}
      {r(4, 11, 16, 12, "#666", "none", 0, 1)}
    </>
  ),
  crs: (
    <>
      {p("M6 1.500h12L23.500 9 20 16l-4 6.500H8L4 16 .5 9z", "#e9e9e9", "#666", 1.1)}
      {p("M12 1v22M.5 9h23M6 2c-2 7-1 14 3 20M18 2c2 7 1 14-3 20M2 5h20M4 15.500h16M9 1.500C7 8 8 16 10 22M15 1.500c2 6.500 1 14.500-1 20.500M3 12h18", "none", "#666", 1)}
    </>
  ),
  chat: (
    <>
      {p("M12 2C5.500 2 1 6 1 11.500 1 17 5.500 20.500 12 20.500c1.500 0 3-.2 4.500-.7l5 3-1.500-5c2-1.700 3-3.800 3-6.300C23 6 18.500 2 12 2z", "#666")}
      {c(7, 11.5, 1.5, "#fff")}
      {c(12, 11.5, 1.5, "#fff")}
      {c(17, 11.5, 1.5, "#fff")}
    </>
  ),
  search: (
    <>
      {c(10, 9.5, 7, "none", "#888", 1.8)}
      {p("M15 15l6.500 7", "none", "#888", 2)}
    </>
  ),
  qgis: qgisLogo,
};

const Icon = ({ name, className = "size-9" }: { name: string; className?: string }) => (
  <svg viewBox="0 0 24 24" className={`${className} shrink-0`} aria-hidden="true">
    {ICONS[name]}
  </svg>
);

/* Elephant head: solid silhouette under the brand outline. */
const Elephant = ({ className, line }: { className: string; line: string }) => (
  <svg viewBox="0 0 24 24" className={`${className} shrink-0`} aria-hidden="true">
    <path d="M4 1.500C6 .3 8.500.6 10 1.200 13 0 17-.2 20 1.200c4 2 3.500 7 1 12 1.500.5 2.500.3 2.500 1.300-1 2-4.500 2.500-6 2-.5 3 0 6-3.500 7-3 .5-4-1.500-4-4.500v-3c-1.500 1.500-3.500 1.500-4.500 0C2.500 12.500-.5 5 4 1.500z" fill="currentColor" />
    <SiPostgresql x="1" y="1" width="22" height="22" className={line} />
  </svg>
);

const Down = ({ className = "text-[#555]" }: { className?: string }) => (
  <svg viewBox="0 0 12 8" className={`h-2 w-3 shrink-0 ${className}`} aria-hidden="true">
    <path d="M0 0h12L6 7z" fill="currentColor" />
  </svg>
);

/* Renders "&x" sequences as underlined accelerators. */
const accel = (s: string) => {
  const i = s.indexOf("&");
  if (i < 0) return s;
  return (
    <>
      {s.slice(0, i)}
      <span className="underline underline-offset-[3px]">{s[i + 1]}</span>
      {s.slice(i + 2)}
    </>
  );
};

/* ---------- toolbars ---------- */

const Tool = ({ spec }: { spec: string }) => {
  if (spec === "|") {
    return (
      <span className="flex w-[25px] shrink-0 justify-center">
        <span className="grid grid-cols-2 gap-x-1 gap-y-[3px]">
          {Array.from({ length: 10 }, (_, i) => <span key={i} className="size-[2px] bg-[#c2c2c2]" />)}
        </span>
      </span>
    );
  }
  if (spec === "/") {
    return (
      <span className="flex w-[10px] shrink-0 justify-center">
        <span className="h-8 w-px bg-[#ccc]" />
      </span>
    );
  }
  if (spec === "v" || spec === "v-") {
    return (
      <button type="button" aria-label="Plus d'options" className="flex w-[17px] shrink-0 justify-center">
        <Down className={spec === "v" ? "text-[#555]" : "text-[#aaa]"} />
      </button>
    );
  }
  const off = spec.startsWith("-");
  const on = spec.startsWith("+");
  const name = spec.replace(/^[-+]/, "");
  return (
    <button
      type="button"
      aria-label={name}
      disabled={off}
      className={`flex h-[47px] w-[49px] shrink-0 items-center justify-center rounded even:w-[50px] ${on ? "border-2 border-[#bababa] bg-[#dcdcdc]" : ""}`}
    >
      <Icon name={name} className={off ? "size-9 opacity-45 grayscale-50" : "size-9"} />
    </button>
  );
};

const Bar = ({ items, children, height = "h-[59px]" }: { items: string; children?: ReactNode; height?: string }) => (
  <div className={`flex shrink-0 items-center overflow-hidden border-b-2 border-[#bcbcbc] bg-linear-to-b from-[#fbfbfb] to-[#efefef] ${height}`}>
    <div className="-ml-[6px] flex items-center">
      {items.split(" ").map((s, i) => <Tool key={i} spec={s} />)}
      {children}
    </div>
  </div>
);

const ROW1 = "| page folder save layout wrench styles | +hand pan zoomIn zoomOut zoomFull zoomSel zoomLayer -zoomNative zoomLast -zoomNext newMap map3d bookmarkNew bookmarks clock refresh | select v form v deselect v selectLoc v | identify abacus gear sigma table v ruler v tip -action v-";
const ROW2 = "| dataSource geopackage vNew feather chip mesh vMesh | -pencils pencil -saveEdit -segment v- -blobNew -vertexTool v- -multiEdit -trash -cut -copy -paste -undo -redo | labelYellow diagram / labelPin labelRed / -labelGrayPin -labelEye -labelMove -labelRotate -labelEdit | webAdd webSearch webBino | python leaf | help |";
const ROW3 = "| -setSquare -blobMove v- -blobRotate -blobScale -simplify -ringAdd -partAdd -ringFill -ringDel -partDel -reshape -offset -vRotate -mergeV -split -split -mergeF -mergeA -rotSym v- | magnet -snapV";
const ROW4 = "| -arc -circle v- -ellipse v- -rectD v- -polyD v- | greenC mapPen";

/* ---------- form controls ---------- */

const btn = "flex items-center justify-center rounded border-2 border-[#b9b9b9] bg-linear-to-b from-[#fefefe] to-[#ececec]";

const Combo = ({ label: name, value, icon, className = "", white = false, disabled = false }: { label: string; value: string; icon?: ReactNode; className?: string; white?: boolean; disabled?: boolean }) => (
  <div className={`relative flex items-center rounded border-2 border-[#b9b9b9] ${white ? "bg-white" : "bg-linear-to-b from-[#fefefe] to-[#ececec]"} ${className}`}>
    {icon}
    <select aria-label={name} disabled={disabled} className="h-full min-w-0 flex-1 appearance-none bg-transparent pl-1 outline-none">
      <option>{value}</option>
    </select>
    <span className={`pointer-events-none flex h-full items-center justify-center ${white ? "w-7 border-l-2 border-[#b9b9b9] bg-[#f4f4f4]" : "w-8"}`}>
      <Down className={disabled ? "text-[#aaa]" : "text-[#555]"} />
    </span>
  </div>
);

const Spin = ({ label: name, value, className = "", extra, dimUp = false, disabled = false }: { label: string; value: string; className?: string; extra?: ReactNode; dimUp?: boolean; disabled?: boolean }) => (
  <div className={`flex h-[30px] items-center overflow-hidden rounded border-2 border-[#b9b9b9] ${disabled ? "bg-[#f0f0f0] text-[#777]" : "bg-white"} ${className}`}>
    <input aria-label={name} defaultValue={value} disabled={disabled} className={`h-full min-w-0 flex-1 bg-transparent outline-none ${extra ? "pl-[2px]" : "pl-1.5"}`} />
    {extra}
    <span className="flex h-full w-5 shrink-0 flex-col items-center justify-center gap-[5px] border-l-2 border-[#b9b9b9] bg-[#f7f7f7]">
      <Down className={`rotate-180 ${dimUp || disabled ? "text-[#aaa]" : "text-[#555]"}`} />
      <Down className={disabled ? "text-[#aaa]" : "text-[#555]"} />
    </span>
  </div>
);

const Check = ({ text, on = false, gap = "gap-2", name }: { text?: ReactNode; on?: boolean; gap?: string; name?: string }) => {
  const id = useId();
  return (
    <span className={`flex shrink-0 items-center ${gap}`}>
      <span className="relative flex">
        <input id={id} type="checkbox" defaultChecked={on} aria-label={name} className="peer size-5 appearance-none border-2 border-[#c4c4c4] bg-white" />
        <svg viewBox="0 0 20 20" className="pointer-events-none absolute inset-0 hidden size-5 peer-checked:block" aria-hidden="true">
          <path d="M5.500 10.500L8.700 15 14.500 4.500" fill="none" stroke="#111" strokeWidth="2.4" />
        </svg>
      </span>
      {text && <label htmlFor={id}>{text}</label>}
    </span>
  );
};

/* ---------- left docks ---------- */

const SCHEMAS = ["BELM2433", "FAYT16299", "geo7630", "GONT1331", "HADI0831", "HAMK153", "MASL6831", "MBAI8926", "MEIB19269", "NGUR0233", "public", "RANL1329", "ROBL7729", "SIDM9333", "TARA1535", "UMBD283"];

const CLASSES = [
  { swatch: "bg-[#f7fcf5]", values: "0,0000000 - 0,0005000", legend: "0 - 0,0005" },
  { swatch: "bg-[#c9eac2]", values: "0,0005000 - 0,0010000", legend: "0,0005 - 0,001" },
  { swatch: "bg-[#7bc77c]", values: "0,0010000 - 0,0015000", legend: "0,001 - 0,0015" },
  { swatch: "bg-[#2a924b]", values: "0,0015000 - 0,0020000", legend: "0,0015 - 0,002" },
  { swatch: "bg-[#00441b]", values: "0,0020000 - 0,0023793", legend: "0,002 - 0,00238" },
];

const MiniTools = ({ names, active }: { names: string[]; active?: string }) => (
  <div className="flex h-[44px] shrink-0 items-center pl-[6px]">
    {names.map((n) => (
      <button key={n} type="button" aria-label={n} className={`mr-[2px] flex size-9 items-center justify-center rounded ${n === active ? "border-2 border-[#b5b5b5] bg-[#dadada]" : ""}`}>
        <Icon name={n} className="size-6" />
      </button>
    ))}
  </div>
);

const LeftDock = () => (
  <aside className="flex w-[359px] shrink-0 flex-col">
    <h2 className="flex h-8 shrink-0 items-center pl-[6px]">Explorateur</h2>
    <MiniTools names={["addLayer", "refresh", "funnel", "collapse", "info"]} />
    <ul className="h-[536px] shrink-0 overflow-hidden border-y border-l-2 border-[#b9b9b9] bg-white pt-px">
      <li className="flex h-[27px] items-center pl-[6px]">
        <Down />
        <Elephant className="ml-[10px] size-6 text-[#7ba6d8]" line="text-[#3c6796]" />
        <span className="ml-[10px]">PostgreSQL</span>
      </li>
      <li className="flex h-[27px] items-center pl-[30px]">
        <Down />
        <Icon name="conn" className="ml-[12px] size-5" />
        <span className="ml-[12px]">Labo2</span>
      </li>
      {SCHEMAS.map((s) => (
        <li key={s} className={`flex h-[27px] items-center pl-[53px] ${s.startsWith("MBAI") ? "bg-[#eee]" : ""}`}>
          <Down className="-rotate-90 text-[#555]" />
          <Icon name="db" className="ml-[13px] size-5" />
          <span className="ml-[11px]">{s}</span>
        </li>
      ))}
      <li className="flex h-[27px] items-center pl-[28px]">
        <Icon name="hana" className="size-6" />
        <span className="ml-[9px]">SAP HANA</span>
      </li>
      <li className="flex h-[27px] items-center pl-[28px]">
        <Icon name="mssql" className="size-6" />
        <span className="ml-[9px]">MS SQL Server</span>
      </li>
    </ul>
    <h2 className="mt-2 flex h-[34px] shrink-0 items-center pl-[6px]">Couches</h2>
    <MiniTools names={["brush", "layerGroup", "eye", "funnelDrop", "epsFilter"]} active="brush" />
    <ul className="min-h-0 flex-1 border-b-2 border-l-2 border-[#b9b9b9] bg-white">
      <li className="flex h-[28px] items-center bg-[#0078d7] pl-[8px] font-bold text-white">
        <Down className="text-[#12324f]" />
        <span className="ml-[14px]"><Check on name="densite_arbres_quartiers" /></span>
        <Icon name="poly" className="ml-[10px] size-6" />
        <span className="ml-[9px] underline underline-offset-[3px]">densite_arbres_quartiers</span>
      </li>
      {CLASSES.map((k) => (
        <li key={k.legend} className="flex h-[42px] items-center pl-[64px]">
          <Check on name={k.legend} />
          <span className={`ml-[10px] h-[39px] w-[39px] ${k.swatch}`} />
          <span className="ml-[9px]">{k.legend}</span>
        </li>
      ))}
      <li className="flex h-[28px] items-center pl-[8px] font-bold">
        <Down />
        <span className="ml-[14px]"><Check on name="Dark Matter" /></span>
        <Icon name="matter" className="ml-[13px] size-5" />
        <span className="ml-[10px]">Dark Matter</span>
      </li>
    </ul>
  </aside>
);

/* ---------- map ---------- */

const AREAS: [string, string][] = [
  ["#f7fcf5", "M0 940H968L1060 930 1118 932 1142 1010C1150 1040 1150 1080 1130 1150 1115 1190 1085 1235 1040 1255 1005 1268 960 1262 930 1268 890 1285 850 1300 820 1298 790 1290 785 1270 765 1258 745 1235 700 1236 660 1237 600 1241 520 1248 450 1256 395 1270 345 1320 298 1406 240 1355 150 1298 100 1294 65 1295 55 1347 30 1347H0z"],
  ["#c9eac4", "M1125 15L1120 50 1100 80 1085 97 1050 110 1020 145 1000 160 965 185 930 215 900 230 870 262 855 285 918 381 1012 283 1077 218 1142 266 1246 294C1258 270 1268 255 1266 235 1262 200 1250 195 1244 155 1238 120 1240 80 1241 60 1245 40 1252 30 1257 15z"],
  ["#f7fcf5", "1077,218 1142,266 1246,294 1235,325 1215,355 1203,394 1100,366 1103,346 1012,283"],
  ["#f7fcf5", "1012,283 1103,346 1098,372 1092,368 1076,370 1082,385 1086,392 1085,403 1098,425 1090,435 1078,430 1082,455 1072,462 1066,480 1007,450 912,388 918,381"],
  ["#f7fcf5", "M855 285C835 310 822 335 815 370 810 395 803 420 797 432L788 440 780 460 760 500 820 544 843 507 908 388 918 381z"],
  ["#7bc77c", "1100,366 1182,390 1176,430 1182,470 1190,500 1185,545 1172,568 1155,580 1152,605 1135,632 1143,628 1143,645 1165,655 1118,737 1088,747 1070,720 1040,708 1000,700 1000,440 1066,480 1072,462 1082,455 1078,430 1090,435 1098,425 1085,403 1086,392 1082,385 1076,370 1092,368 1098,372"],
  ["#2a924b", "908,388 1007,450 1012,480 1024,495 1018,522 1010,525 995,522 960,590 848,505 843,507"],
  ["#2a924b", "848,505 960,590 915,680 900,675 870,725 862,770 780,770 800,720 822,672 860,642 796,595 820,544"],
  ["#7bc77c", "770,512 820,544 796,595 860,642 822,672 800,720 780,770 500,770 545,748 580,735 600,715 620,700 630,683 655,672 690,668 706,655 712,628 728,610 742,598 746,578 750,555 742,560 739,552 745,530 762,520"],
  ["#c9eac4", "1037,708 1068,712 1088,747 1118,737 1132,820 1148,912 1092,943 1055,930 1048,908 1030,898 1015,930 998,925 968,950 940,900 940,820"],
  ["#00441b", "995,522 1010,520 1035,537 1065,558 1050,600 1048,665 1032,730 1015,790 998,867 978,855 960,840 850,780 862,751 885,710 905,675 915,680 960,590"],
  ["#7bc77c", "1030,898 1048,908 1055,930 1092,943 1120,932 1142,1010 1095,997 1053,1032 1000,1005 1000,1042 976,1040 975,1090 950,1130 925,1172 890,1165 893,1140 908,1125 905,1095 885,1082 860,1098 840,1122 760,1075 775,1045 785,1025 800,1008 835,990 830,980 795,950 885,950 880,968 925,1005 935,998 998,922 1015,932"],
  ["#c9eac4", "M1000 1005L1053 1032 1095 997 1142 1010 1149 1045C1148 1100 1140 1135 1125 1160 1112 1185 1100 1205 1090 1215L925 1172 950 1130 975 1090 976 1040 1000 1042z"],
  ["#7bc77c", "705,950 765,950 765,984 745,970 730,966 710,970"],
];

const BORDERS = [
  "M0 995l15 5 20 45 35 2 50-30 20-15M150 1000l10 20 18-20M200 965l-20 45",
  "M235 960l-5 20-28 28 30 48 38 78-78 0-50 28-8-8-25 24-25 8-12 2",
  "M202 1008l-22 60-35 38-75 20",
  "M0 1145l65-22 0 35 12 20-77 65",
  "M77 1178l6 55 15 60M253 1134l62 240M232 1056l85-70 12 14 60-40M375 966l42 72-12 8 8 45 36 165",
  "M455 960l-20 12 20 20-4 12 48 62 80-99 38 40 38 42 5-26 33 36-15 38 30 6 20-10 8-14M618 1009l-45 58 24 175",
  "M708 968l-18 92M737 1242v-48l95-65M835 1120l-75-45M730 1085l80 50 25-15M765 984l35 23M512 1192l15-5 10 8-12 8z",
  "M1040 708l-60-5-40 40",
];

const ROADS = [
  "M330 20Q350 130 430 190T560 280 620 350 710 430 800 500", "M300 330Q340 440 440 490T530 540 600 580 690 670", "M300 640Q360 690 420 760M410 20Q370 120 300 190",
  "M780 20Q820 90 800 180T790 290 860 400M810 180Q750 150 690 90T640 20M600 20Q520 100 520 170T580 300 650 430 720 530", "M310 280Q420 290 540 230M540 400Q660 340 740 270T800 180M480 550Q540 470 600 450T720 400",
  "M1190 505Q1240 540 1310 560T1390 580 1568 555", "M1375 20Q1400 80 1450 120T1490 250 1500 400 1568 540M1510 20Q1530 100 1530 180T1568 310M1568 130Q1500 200 1480 320T1430 620 1390 800",
  "M1120 740Q1140 800 1170 840T1230 880 1320 880 1400 860 1568 850", "M1150 1028Q1240 1040 1310 1053T1400 1140 1500 1290 1568 1350M1568 1000Q1470 1070 1398 1145T1290 1280 1220 1400 1180 1554",
  "M1250 720Q1290 800 1310 870T1320 1000 1280 1150 1270 1310 1290 1500M1160 880Q1200 910 1210 940T1215 1030", "M900 1330Q850 1340 820 1370T720 1480 660 1554M700 1290Q780 1330 840 1370T1000 1400 1170 1440 1568 1500",
  "M470 1554Q500 1470 560 1440T670 1350M1000 1340Q1000 1400 1020 1460T1080 1554M1390 560Q1410 640 1420 720T1568 850M830 1480Q920 1430 1000 1420T1190 1360 1340 1240", "M20 1400Q40 1450 80 1490T150 1500",
];

const PLACES: [number, number, string, number][] = [
  [396, 121, "Lorraine", 10], [487, 118, "Bois-des-Filion", 11], [350, 295, "Rosemère", 11], [497, 303, "AUTEUIL", 9], [386, 384, "SAINTE-", 8], [386, 397, "ROSE", 8],
  [569, 417, "VIMONT", 9], [727, 470, "DUVERNAY", 9], [495, 551, "LAVAL", 12], [698, 569, "PONT-VIAU", 9], [641, 633, "LAVAL-DES-", 8], [641, 646, "RAPIDES", 8],
  [523, 719, "CHOMEDEY", 9], [789, 368, "ST-VINCENT-", 8], [789, 381, "DE-PAUL", 8], [968, 145, "SAINT-", 8], [968, 158, "FRANÇOIS", 8], [1381, 63, "Varennes", 11],
  [1336, 420, "Boucherville", 12], [1222, 768, "VIEUX-", 8], [1222, 781, "LONGUEUIL", 8], [1303, 797, "LONGUEUIL", 12], [1422, 868, "SAINT-", 8], [1422, 881, "HUBERT", 8],
  [1176, 889, "Saint-Lambert", 11], [1294, 1098, "Brossard", 11], [1234, 1270, "La Prairie", 11], [706, 1280, "Kahnawake", 10], [989, 1336, "Sainte-", 10], [989, 1354, "Catherine", 10],
  [1157, 1409, "Candiac", 11], [1087, 1463, "Delson", 10], [1005, 1474, "Saint-Constant", 11], [502, 1529, "Châteauguay", 11], [1265, 1538, "Saint-Philippe", 10], [68, 1560, "Notre-Dame-de", 11],
];

const MapCanvas = () => (
  <svg viewBox="0 0 1250 1074" preserveAspectRatio="xMinYMin slice" className="absolute inset-0 size-full bg-[#0a0a0a]" role="img" aria-label="Carte de Montréal">
    <defs>
      <pattern id="streets" width="26" height="18" patternUnits="userSpaceOnUse" patternTransform="rotate(38)">
        <path d="M0 4h26M0 11h18M8 0v18M19 4v14" stroke="#131313" strokeWidth="1" fill="none" />
      </pattern>
      <pattern id="streetsSouth" width="22" height="26" patternUnits="userSpaceOnUse" patternTransform="rotate(12)">
        <path d="M0 5h22M0 16h14M6 0v26M15 5v16" stroke="#141414" strokeWidth="1" fill="none" />
      </pattern>
    </defs>
    <g transform="translate(0 -15) scale(.7972 .7015)">
      <path d="M300 360L620 160 820 250 800 430 700 620 560 740 300 740z" fill="url(#streets)" />
      <path d="M300 20h300l-100 130-200 160zM640 20h420l-160 180-200-60z" fill="url(#streets)" opacity=".6" />
      <path d="M1130 760L1290 560 1568 620V900L1420 1180 1240 1240 1170 960z" fill="url(#streetsSouth)" />
      <path d="M900 1350L1240 1280 1320 1420 1200 1554H880zM520 1360h140l120 190H430zM1330 330h120v130h-150z" fill="url(#streetsSouth)" />
      <g fill="none" stroke="#232323" strokeLinejoin="round" strokeLinecap="round">
        <path d="M1120 15l-25 65-45 30-120 100-70 65-40 60-15 80-60 110-10 60-20 50-45 50-70 15-60 55" strokeWidth="32" />
        <path d="M740 20Q700 20 680 40T620 65 550 75 510 120 475 165 440 215 405 260 395 310 370 350 375 390 340 410 310 430" strokeWidth="13" />
        <path d="M545 80Q530 110 500 150T460 220" strokeWidth="7" />
        <path d="M365 355l-25 25-30-5M375 395l-45 15-15 20M350 345l-20 15" strokeWidth="9" />
        <path d="M490 1330Q500 1370 492 1410T495 1500 505 1554" strokeWidth="9" />
      </g>
      <path d="M1200 15h165l10 65-25 120-22 100-35 100-28 100-38 80-52 100-50 65 15 75 20 60-5 40 25 80 35 40 8 70v90l-25 80-70 60-50-20H980l-80 14-80-5-60-35-60-5-60 5-60 40-20 10-22-10-34-6-20 60-30 40-20 70-35 49H-10V1300h300l400-100 380-20V700L1060 300z" fill="#252525" />
      <g fill="#0a0a0a">
        <path d="M1254 15h88l-8 45-20 40-14 50-10 50-14 35-12-20-14-45-8-60z" />
        <path d="M1335 150l-12 70-22 70-16 50-20 30 8-60 20-50 14-60zM1250 400l-20 70-25 40 12-60z" />
        <path d="M-10 1385l40-5 20-22 25 5-5 40 14 0 18 65 32 14 25-28 35 5 10 28-40 25-22 15-17 25H-10z" />
        <path d="M76 1330l14-22 8 12 18-2-8 18-16 8zM560 1330l22-30 60-10-50 30zM900 1322l80-12 80 6-60-2-60 8z" />
      </g>
      <path d="M1175 1050l20 130-5 90-50 40-150-15-140 20-100-18" fill="none" stroke="#151515" strokeWidth="3" />
      {ROADS.map((d) => (
        <g key={d} fill="none" strokeLinejoin="round">
          <path d={d} stroke="#171717" strokeWidth="5" />
          <path d={d} stroke="#000" strokeWidth="3" />
        </g>
      ))}
    </g>
    <g fill="#4b4b4b" fontFamily="Open Sans, sans-serif" fontWeight="600" textAnchor="middle">
      {PLACES.map(([x, y, t, size]) => (
        <text key={t + y} x={Math.round(x * 0.7972)} y={Math.round(y * 0.7015 - 15)} fontSize={size}>{t}</text>
      ))}
    </g>
    <g transform="translate(0 -15) scale(.7972 .7015)">
      {AREAS.map(([fill, pts]) => (
        <path key={pts} d={pts.startsWith("M") ? pts : `M${pts}z`} fill={fill} stroke="#33443a" strokeWidth="0.6" strokeOpacity=".5" />
      ))}
      <ellipse cx="715" cy="752" rx="22" ry="9" fill="#f7fcf5" />
      {BORDERS.map((d) => <path key={d} d={d} fill="none" stroke="#a3aba3" strokeWidth="0.9" />)}
      <path d="M455 1005l15 25 29 36M605 995l14 14M1092 943l27-12M1062 0" fill="none" stroke="#1a1a1a" strokeWidth="1.5" />
      <path d="M840 1108l22-28 20-18 30-18 22-20" fill="none" stroke="#2f4a33" strokeWidth="1" />
      <path d="M1182 390l-5 40 5 40 8 32-6 40-13 26-17 12-3 25-16 28" fill="none" stroke="#0a0a0a" strokeWidth="3" />
    </g>
  </svg>
);

/* ---------- style panel ---------- */

const SIDE = ["labelMid", "labelOutline", "cube", "terrain", "brushes", "history"];

const StylePanel = () => (
  <aside className="flex w-[669px] shrink-0 flex-col pr-[5px] pb-[8px] text-[16px]">
    <div className="flex h-[34px] shrink-0 items-center justify-between pl-[2px] text-[17px]">
      <h2>Style de Couche</h2>
      <span className="-mr-[3px] flex gap-1">
        <button type="button" aria-label="Détacher" className="size-[17px] rounded border border-[#777]">
          <svg viewBox="0 0 16 16"><path d="M3 6h7v7H3zM6 6V3h7v7h-3" fill="none" stroke="#666" /></svg>
        </button>
        <button type="button" aria-label="Fermer" className="size-[17px] rounded border border-[#777]">
          <svg viewBox="0 0 16 16"><path d="M3.500 3.500l9 9M12.500 3.500l-9 9" stroke="#555" strokeWidth="3" /></svg>
        </button>
      </span>
    </div>
    <Combo label="Couche" value="densite_arbres_quartiers" icon={<Icon name="poly" className="ml-2 size-6" />} className="h-9 shrink-0" />
    <div className="mt-[6px] flex min-h-0 flex-1">
      <nav className="flex w-[57px] shrink-0 flex-col bg-[#5f5f5f]">
        <button type="button" aria-label="Symbologie" className="flex h-[52px] items-center justify-center bg-[#efefef]">
          <Icon name="brush" className="size-8" />
        </button>
        {SIDE.map((n) => (
          <button key={n} type="button" aria-label={n} className="flex h-12 items-center pl-[6px]">
            <Icon name={n} className="size-[34px]" />
          </button>
        ))}
      </nav>
      <div className="flex min-w-0 flex-1 flex-col pt-[13px] pl-[5px]">
        <Combo label="Rendu" value="Gradué" icon={<Icon name="gradue" className="ml-2 size-[22px]" />} className="h-[35px] shrink-0" />
        <div className="mt-[10px] grid shrink-0 grid-cols-[148px_minmax(0,1fr)] items-center gap-y-[10px]">
          <span>Valeur</span>
          <div className="flex gap-[11px]">
            <Combo label="Valeur" value="densite_arbre" white className="h-[35px] flex-1" icon={<span className="pr-1 pl-1 text-[14px] font-bold text-[#555]">1.2</span>} />
            <button type="button" aria-label="Expression" className={`${btn} w-[35px]`}><Icon name="epsilon" className="size-5" /></button>
          </div>
          <span>Symbole</span>
          <div className="flex gap-[2px]">
            <button type="button" aria-label="Symbole" className={`${btn} h-[39px] flex-1`} />
            <button type="button" aria-label="Options du symbole" className={`${btn} w-4`}><Down /></button>
          </div>
          <label htmlFor="legend-format">Format de légende</label>
          <div className="flex items-center">
            <input id="legend-format" defaultValue="%1 - %2" className="h-8 w-[224px] rounded border-2 border-[#b9b9b9] bg-white pl-[2px]" />
            <Spin
              label="Précision"
              value="écision5"
              className="ml-[11px] w-[122px]"
              extra={
                <svg viewBox="0 0 20 16" className="mr-3 ml-2 h-4 w-5 shrink-0" aria-hidden="true">
                  <path d="M6 0h14v16H6L0 8z" fill="#999" />
                  <path d="M8 4l8 8M16 4l-8 8" stroke="#fff" strokeWidth="2" />
                </svg>
              }
            />
            <span className="ml-[10px]"><Check on text="Couper" /></span>
          </div>
          <span>Palette de couleur</span>
          <div className="flex gap-[2px]">
            <button type="button" aria-label="Palette" className={`${btn} h-8 min-w-0 flex-1 px-1 py-[3px]`}>
              <span className="h-full w-full bg-[linear-gradient(90deg,#f7fcf5,#e5f5e0_13%,#c7e9c0_26%,#a1d99b_39%,#74c476_52%,#41ab5d_65%,#238b45_78%,#006d2c_90%,#00441b)]" />
            </button>
            <button type="button" aria-label="Options de palette" className={`${btn} w-4`}><Down /></button>
          </div>
        </div>
        <div className="mt-[11px] flex h-[34px] shrink-0 items-end border-b-2 border-[#c4c4c4]" role="tablist">
          <button type="button" role="tab" aria-selected="true" className="h-[34px] w-[90px] rounded-t border-2 border-b-0 border-[#c4c4c4] bg-[#fcfcfc]">Classes</button>
          <button type="button" role="tab" aria-selected="false" className="h-[31px] w-[132px] rounded-t border-2 border-b-0 border-l-0 border-[#c4c4c4] bg-[#e9e9e9]">Histogramme</button>
        </div>
        <div className="mt-[15px] min-h-0 flex-1 overflow-hidden border-t-2 border-r-2 border-[#c4c4c4] bg-white text-[17px]">
          <table className="w-full table-fixed border-collapse text-left">
            <colgroup>
              <col className="w-[112px]" />
              <col className="w-[191px]" />
              <col />
            </colgroup>
            <thead className="h-[29px] bg-linear-to-b from-white to-[#ececec]">
              <tr className="border-b-2 border-[#c4c4c4]">
                <th className="border-r-2 border-[#c4c4c4] p-0 pl-[3px] font-normal">
                  <span className="flex items-center justify-between pr-1">Symbole <Down /></span>
                </th>
                <th className="border-r-2 border-[#c4c4c4] p-0 pl-1 font-normal">Valeurs</th>
                <th className="p-0 pl-1 font-normal">Légende</th>
              </tr>
            </thead>
            <tbody>
              {CLASSES.map((k) => (
                <tr key={k.values} className="h-[27px]">
                  <td className="p-0 pl-[6px]">
                    <span className="flex items-center gap-[9px]">
                      <Check on name={k.legend} />
                      <span className={`h-6 w-6 ${k.swatch}`} />
                    </span>
                  </td>
                  <td className="p-0 pl-[6px] leading-6 whitespace-nowrap">{k.values}</td>
                  <td className="p-0 pl-[5px] leading-6">{k.legend}</td>
                </tr>
              ))}
            </tbody>
          </table>
        </div>
        <div className="mt-3 flex h-[35px] shrink-0 items-center">
          <span className="w-[49px]">Mode</span>
          <Combo label="Mode" value="Jolies ruptures" icon={<Icon name="jolies" className="ml-[6px] size-6" />} className="h-[35px] w-[273px]" />
          <span className="mr-[11px] ml-auto">Classes</span>
          <Spin label="Classes" value="5" className="w-[101px]" />
        </div>
        <div className="mt-[10px] flex h-[22px] shrink-0 items-center pl-[6px] font-bold">
          <svg viewBox="0 0 12 16" className="mr-3 h-4 w-3" aria-hidden="true"><path d="M1 1v14l10-7z" fill="#444" stroke="#111" /></svg>
          <Check text="Classification symétrique" gap="gap-3" />
        </div>
        <div className="mt-[13px] flex h-[35px] shrink-0 items-center gap-[11px]">
          <button type="button" className={`${btn} h-[33px] w-[120px]`}>Classer</button>
          <button type="button" aria-label="Ajouter une classe" className={`${btn} -ml-[1px] h-[35px] w-10`}><Icon name="plusO" className="size-6" /></button>
          <button type="button" aria-label="Supprimer la classe" className={`${btn} h-[35px] w-10`}><Icon name="minusO" className="size-6" /></button>
          <button type="button" className={`${btn} -ml-[1px] h-[33px] w-[126px] whitespace-nowrap`}>Supprimer Tout</button>
          <button type="button" className={`${btn} ml-auto h-[33px] w-[119px] gap-6 pl-5`}>Avancé <Down /></button>
        </div>
        <div className="mt-3 flex h-6 shrink-0 items-center"><Check on text="Lier les limites de classe" /></div>
        <div className="mt-[26px] flex h-6 shrink-0 items-center gap-[12px] pl-[3px] font-bold">
          <svg viewBox="0 0 16 12" className="mt-1 h-3 w-4" aria-hidden="true"><path d="M1 1h14l-7 10z" fill="#444" stroke="#111" /></svg>
          Rendu de couche
        </div>
        <section className="mt-1 h-[210px] shrink-0 border-2 border-[#dadada] bg-[#ededed] pl-[2px] pr-[7px]">
          <div className="mt-[14px] flex h-[32px] items-center">
            <label htmlFor="opacity" className="w-[132px]">Opacité</label>
            <input
              id="opacity"
              type="range"
              defaultValue={100}
              className="h-5 min-w-0 flex-1 appearance-none bg-transparent [&::-webkit-slider-runnable-track]:h-2 [&::-webkit-slider-runnable-track]:rounded [&::-webkit-slider-runnable-track]:border [&::-webkit-slider-runnable-track]:border-[#0f62ae] [&::-webkit-slider-runnable-track]:bg-[#1f8aec] [&::-webkit-slider-thumb]:-mt-[7px] [&::-webkit-slider-thumb]:h-5 [&::-webkit-slider-thumb]:w-5 [&::-webkit-slider-thumb]:appearance-none [&::-webkit-slider-thumb]:rounded [&::-webkit-slider-thumb]:border-2 [&::-webkit-slider-thumb]:border-[#aaa] [&::-webkit-slider-thumb]:bg-[#fafafa]"
            />
            <Spin label="Opacité en pourcentage" value="100,0%" dimUp className="ml-[6px] w-[149px]" />
          </div>
          <div className="mt-2 grid grid-cols-[128px_minmax(0,1fr)_minmax(0,1fr)] gap-x-[3px]">
            <span className="row-span-2 self-center">Mode de fusion</span>
            <span className="leading-6">Couche</span>
            <span className="leading-6">Entité</span>
            <Combo label="Fusion de la couche" value="Normal" className="h-[35px]" />
            <Combo label="Fusion de l'entité" value="Normal" className="h-[35px]" />
          </div>
          <div className="mt-[10px] flex h-6 items-center justify-between">
            <Check text="Effets" />
            <button type="button" disabled aria-label="Personnaliser les effets" className={`${btn} h-6 w-[35px] border-[#d0d0d0]`}><Icon name="starFx" className="size-5 opacity-50" /></button>
          </div>
          <div className="mt-[9px] flex h-[34px] items-center justify-between">
            <Check text="Contrôle de l'ordre de rendu des entités" />
            <button type="button" disabled aria-label="Ordre de tri" className={`${btn} h-[34px] w-[35px] border-[#d0d0d0]`}><Icon name="az" className="size-6 opacity-60" /></button>
          </div>
        </section>
        <div className="mt-[10px] flex h-[34px] shrink-0 items-center">
          <button type="button" aria-label="Annuler" className={`${btn} h-[34px] w-9`}><Icon name="undoO" className="size-5" /></button>
          <button type="button" aria-label="Rétablir" className={`${btn} ml-[9px] h-[34px] w-9`}><Icon name="redoG" className="size-5" /></button>
          <span className="mr-[19px] ml-auto"><Check on text="Mise à jour en direct" /></span>
          <button type="button" className={`${btn} h-[33px] w-[119px]`}>Appliquer</button>
        </div>
      </div>
    </div>
  </aside>
);

/* ---------- menus ---------- */

type Entry = { t: string; icon?: string; off?: boolean; sub?: boolean; on?: boolean };

const CONTEXT: (Entry | null)[] = [
  { t: "&Zoomer sur la(les) couche(s)", icon: "zoomLayer" },
  { t: "Zoom sur la &sélection", icon: "zoomLayer", off: true },
  { t: "Montrer dans la vue d'ensemble", icon: "glasses" },
  { t: "Affi&cher le nombre d'entités", icon: "boxEmpty" },
  { t: "Afficher les éti&quettes", icon: "labelMid" },
  { t: "Copier la Couche" },
  { t: "Re&nommer la couche" },
  null,
  { t: "&Dupliquer la couche", icon: "duplicate" },
  { t: "&Supprimer la couche", icon: "remove" },
  null,
  { t: "Déplacer en &bas" },
  null,
  { t: "Ouvrir la Table d'&Attributs", icon: "table" },
  { t: "Bascul&er en mode édition", icon: "pencil" },
  { t: "&Filtrer..." },
  { t: "C&hanger la source de données..." },
  null,
  { t: "Échelle de &visibilité de la couche..." },
  { t: "SCR de la couche", sub: true },
  null,
  { t: "E&xporter", sub: true, on: true },
  null,
  { t: "Styles", sub: true },
  { t: "Ajouter des notes de couche..." },
  { t: "&Propriétés..." },
];

const EXPORT: Entry[] = [
  { t: "Sauveg&arder les entités sous..." },
  { t: "Sauvegarder les entités &sélectionnées sous...", off: true },
  { t: "Enregistrer en tant que fichier de &définition de couche..." },
  { t: "Enregistrer en tant que fichier de style de couche QGIS...", on: true },
];

const MenuRow = ({ e }: { e: Entry }) => (
  <button
    type="button"
    role="menuitem"
    disabled={e.off}
    className={`flex h-9 w-full shrink-0 items-center text-left whitespace-nowrap ${e.on ? "border-2 border-[#3ba3f7] bg-[#0078d7] text-white" : "border-2 border-transparent"} ${e.off ? "text-[#808080]" : ""}`}
  >
    <span className="flex w-[38px] shrink-0 items-center pl-[7px]">
      {e.icon && <Icon name={e.icon} className={e.off ? "size-6 opacity-40" : "size-6"} />}
    </span>
    <span className="flex-1">{accel(e.t)}</span>
    {e.sub && <Down className={`mr-[2px] -rotate-90 ${e.on ? "text-[#a8d4f7]" : "text-[#555]"}`} />}
  </button>
);

const menuBox = "absolute flex flex-col border-2 border-[#979797] bg-white shadow-[3px_3px_4px_rgba(0,0,0,0.35)]";

/* ---------- taskbar ---------- */

const Office = ({ letter, color, shade, round = false }: { letter: string; color: string; shade: string[]; round?: boolean }) => (
  <svg viewBox="0 0 24 24" className="size-9">
    {round ? (
      <>
        <circle cx="14" cy="12" r="10" fill={shade[0]} />
        <path d="M14 2a10 10 0 0 1 10 10H14z" fill={shade[1]} />
        <path d="M14 22a10 10 0 0 0 10-10H14z" fill={shade[2]} />
      </>
    ) : (
      <>
        <rect x="6" y="2" width="17" height="20" rx="1.5" fill={shade[0]} />
        <path d="M6 7h17v5H6z" fill={shade[1]} />
        <path d="M6 12h17v5H6z" fill={shade[2]} />
      </>
    )}
    <rect x="1" y="6.5" width="11" height="11" rx="1.2" fill={color} />
    <text x="6.5" y="15.3" fontSize="9" fontWeight="700" fill="#fff" textAnchor="middle" fontFamily="Open Sans, sans-serif">{letter}</text>
  </svg>
);

const svg = (children: ReactNode) => <svg viewBox="0 0 24 24" className="size-9">{children}</svg>;

const APPS: { name: string; dot?: boolean; active?: boolean; art: ReactNode }[] = [
  { name: "Démarrer", art: svg(<>{r(0.5, 0.5, 11.2, 11.2, "#2fb3f5", "none", 0, 0.6)}{r(12.3, 0.5, 11.2, 11.2, "#1c9cee", "none", 0, 0.6)}{r(0.5, 12.3, 11.2, 11.2, "#1590e6", "none", 0, 0.6)}{r(12.3, 12.3, 11.2, 11.2, "#0a78d4", "none", 0, 0.6)}</>) },
  { name: "Rechercher", art: svg(<>{c(11, 10.5, 8.5, "#e6e6e6", "#2b2b2b", 1.8)}{p("M17 17l5 5.500", "none", "#2b2b2b", 2.2)}</>) },
  { name: "Vue des tâches", art: svg(<>{r(2, 6.5, 16, 15.5, "#2e2e2e", "none", 0, 1)}{r(7.5, 1.5, 15.5, 14.5, "#f6f6f6", "#ddd", 0.5, 1)}{r(7.5, 6.5, 10.5, 9.5, "#bdbdbd")}</>) },
  { name: "Microsoft Store", art: svg(<>{p("M7 6V1h10v5", "none", "#35c3f3", 1.5)}{r(1, 4, 22, 19, "#17508c", "none", 0, 2)}{r(7, 8.5, 4.6, 4.6, "#f25022")}{r(12.4, 8.5, 4.6, 4.6, "#7fba00")}{r(7, 14, 4.6, 4.6, "#00a4ef")}{r(12.4, 14, 4.6, 4.6, "#ffb900")}</>) },
  { name: "Explorateur de fichiers", dot: true, art: svg(<>{p("M1 3h8l2 2.500h-10z", "#e0a100", "#e0a100")}{r(1, 4.5, 22, 17, "#ffcc45", "none", 0, 1)}{r(5, 15.5, 14, 7, "#1f7fd6", "none", 0, 1.5)}{p("M8 19h8", "none", "#0b4f93", 1.5)}</>) },
  { name: "Edge", dot: true, art: svg(<>{c(12, 12, 11, "#2b9fe0")}{p("M3 8C8-2 23 0 23 11c0 4-3 5.500-6 5.500-3 0-3-1.500-2-3C14 8 7 6 3 8z", "#4fd47c")}{p("M1.500 12c1-5 9-6 12-.5-4 0-6 5-3 9 1.500 2 4 2.500 6 2C8 25 0 20 1.500 12z", "#0d5ca8")}{p("M13.500 12c-1.500 4 2 6 8 4.500-1.500 3-4 4-6.500 4-3.500 0-6-4-1.500-8.500z", "#dcdcdc")}</>) },
  { name: "Teams", dot: true, art: svg(<>{c(13, 5, 3.5, "#7b83eb")}{c(20, 5.5, 2.5, "#5059c9")}{r(8, 9, 11, 13, "#7b83eb", "none", 0, 3)}{p("M19 10h5v6a4 4 0 0 1-5 4z", "#5059c9")}{r(1, 7, 11, 11, "#4b53bc", "none", 0, 1.2)}<text x="6.5" y="15.5" fontSize="9" fontWeight="700" fill="#fff" textAnchor="middle" fontFamily="Open Sans, sans-serif">T</text></>) },
  { name: "Acrobat", art: svg(<>{r(1, 1, 22, 22, "#b30b00", "none", 0, 3)}{p("M5 18c2-1 6-7 6.500-12 .3-2 2-1 1.500.5-1 4 2 8.500 5.500 8.500 2 0 1.500 1.500 0 1.500-4-.5-9 .5-11.500 2.500-1.500 1-3 0-2-1z", "none", "#fff", 1.2)}</>) },
  { name: "Outlook (nouveau)", dot: true, art: svg(<>{p("M5 10l10-8 8 6v11a3 3 0 0 1-3 3H8a3 3 0 0 1-3-3z", "#1f8fe0")}{p("M15 2l8 6-9 8z", "#1554b0")}{p("M7 22l16-12v9a3 3 0 0 1-3 3z", "#4fd3f7")}{r(1, 7, 11, 11, "#0f6cbd", "none", 0, 1.2)}<text x="6.5" y="15.5" fontSize="9" fontWeight="700" fill="#fff" textAnchor="middle" fontFamily="Open Sans, sans-serif">O</text></>) },
  { name: "Visual Studio Code", dot: true, art: svg(<>{p("M17 1v6L4 17.500 1.500 15.500z", "#1b80c4")}{p("M17 23v-6L4 6.500 1.500 8.500z", "#2490d8")}{p("M17 1l6 2.500v17L17 23z", "#37aef5")}</>) },
  { name: "Outlook", dot: true, art: <Office letter="O" color="#0f6cbd" shade={["#28a8ea", "#1474c4", "#50d9ff"]} /> },
  { name: "pgAdmin", art: <Elephant className="size-9 text-[#336791]" line="text-[#dfe8f0]" /> },
  { name: "GitHub", art: <span className="flex size-9 items-center justify-center bg-[#24202a]"><SiGithub className="size-8 text-white" /></span> },
  { name: "PowerPoint", dot: true, art: <Office letter="P" color="#c43e1c" shade={["#ed6c47", "#ff8f6b", "#d35230"]} round /> },
  { name: "Word", dot: true, art: <Office letter="W" color="#185abd" shade={["#41a5ee", "#2b7cd3", "#185abd"]} /> },
  { name: "Photos", dot: true, art: svg(<>{r(2, 1, 20, 22, "#2265c4", "none", 0, 2)}{p("M2 20L12 9l10 12a2 2 0 0 1-2 2H4a2 2 0 0 1-2-2z", "#5cc8f8")}{p("M12 9l10 12a2 2 0 0 1-2 2H9z", "#2f9fe8")}{c(17, 5.5, 1.8, "#fff")}</>) },
  { name: "Excel", dot: true, art: <Office letter="X" color="#107c41" shade={["#33c481", "#21a366", "#185c37"]} /> },
  { name: "Enregistreur", dot: true, art: svg(<>{r(1, 1, 22, 22, "#151515", "none", 0, 2)}{c(12, 12, 9, "none", "#18b8c4", 0.8)}{c(12, 12, 7.3, "none", "#18b8c4", 0.8)}{c(12, 12, 5.8, "#14d8ea")}</>) },
  { name: "QGIS", active: true, art: svg(qgisLogo) },
];

const MENUS = ["Pro&jet", "&Éditer", "V&ue", "&Couche", "&Préférences", "E&xtensions", "&Vecteur", "&Raster", "&Base de données", "&Internet", "&Maillage", "&Traitement", "&Aide"];

export default function App() {
  return (
    <div className="relative flex h-screen w-full flex-col overflow-hidden bg-[#efefef] font-['Open_Sans',sans-serif] text-[17px] leading-6 text-[#111]">
      <header className="flex h-[34px] shrink-0 items-center bg-[#f3f3f3] pl-[2px]">
        <Icon name="qgis" className="size-6" />
        <h1 className="ml-[10px]">*labo2 — QGIS</h1>
        <div className="ml-auto flex pr-[2px]">
          <button type="button" aria-label="Réduire" className="flex w-[70px] justify-center"><svg viewBox="0 0 16 16" className="size-4"><path d="M0 8h16" stroke="#111" strokeWidth="1.3" /></svg></button>
          <button type="button" aria-label="Agrandir" className="flex w-[70px] justify-center"><svg viewBox="0 0 16 16" className="size-4"><path d="M1 5.500A1.500 1.500 0 0 1 2.500 4h8A1.500 1.500 0 0 1 12 5.500v8a1.500 1.500 0 0 1-1.500 1.500h-8A1.500 1.500 0 0 1 1 13.500zM4.500 1.500h7a3 3 0 0 1 3 3v7" fill="none" stroke="#111" strokeWidth="1.5" /></svg></button>
          <button type="button" aria-label="Fermer" className="flex w-[70px] justify-center"><svg viewBox="0 0 16 16" className="size-4"><path d="M1 1l14 14M15 1L1 15" stroke="#111" strokeWidth="1.3" /></svg></button>
        </div>
      </header>
      <nav className="flex h-[31px] shrink-0 items-center gap-px border-b-2 border-[#d8d8d8] pl-[5px]">
        {MENUS.map((m) => <button key={m} type="button" className="px-[10px] whitespace-nowrap">{accel(m)}</button>)}
      </nav>

      <Bar items={ROW1} />
      <Bar items={ROW2} />
      <Bar items={ROW3}>
        <button type="button" disabled aria-label="Type d'accrochage" className="flex h-[46px] w-12 shrink-0 items-center justify-center rounded border-2 border-[#c6c6c6] bg-[#dcdcdc]">
          <Icon name="snapD" className="size-9 opacity-60" />
        </button>
        <Spin label="Tolérance" value="12" disabled className="ml-[3px] w-[124px]" />
        <Combo label="Unité" value="px" disabled className="ml-1 h-[33px] w-[123px] pl-1 text-[#777]" />
        {["topo", "topoBlob", "-xSnap", "-xSnap2", "v-", "-trace"].map((s) => <Tool key={s} spec={s} />)}
      </Bar>
      <Bar items={ROW4} height="h-[56px]" />

      <main className="flex min-h-0 flex-1">
        <LeftDock />
        <section className="ml-[10px] flex min-w-0 flex-1 flex-col border-x-2 border-[#bcbcbc] pt-[3px] pb-[5px]">
          <div className="flex h-[44px] shrink-0 items-center border-y border-[#b5d3ee] bg-[#e6f4fe]">
            <span className="w-[424px] shrink-0 text-right text-[16px] text-[#2452a0]">Des mises à jour de plugins sont disponibles</span>
            <button type="button" className={`${btn} ml-auto h-[34px] w-[212px] text-[16px] whitespace-nowrap`}>Installer des mises à jour...</button>
            <button type="button" aria-label="Fermer le message" className="mr-[34px] ml-[38px]">
              <svg viewBox="0 0 26 26" className="size-[26px]"><circle cx="13" cy="13" r="13" fill="#333" /><path d="M8 8l10 10M18 8L8 18" stroke="#fff" strokeWidth="3.5" /></svg>
            </button>
          </div>
          <div className="relative min-h-0 flex-1 overflow-hidden"><MapCanvas /></div>
        </section>
        <div className="flex w-3 shrink-0 flex-col items-center justify-center gap-[3px]">
          {Array.from({ length: 6 }, (_, i) => <span key={i} className="size-[2px] bg-[#bbb]" />)}
        </div>
        <StylePanel />
      </main>

      <footer className="flex h-[40px] shrink-0 items-center border-b-2 border-[#b5b5b5] pl-[6px] text-[16px]">
        <label className="flex h-8 w-[361px] items-center rounded border-2 border-[#b9b9b9] bg-white pl-[10px]">
          <Icon name="search" className="size-5" />
          <input aria-label="Localiser" placeholder="Taper pour trouver (Ctrl+K)" className="min-w-0 flex-1 bg-transparent pl-3 outline-none placeholder:text-[#777]" />
        </label>
        <div className="ml-auto flex items-center pr-[10px]">
          <label htmlFor="coord">Coordonnée</label>
          <input id="coord" defaultValue="271358  5037163" className="ml-[3px] h-8 w-[150px] rounded border-2 border-[#b9b9b9] bg-white text-center" />
          <span className="mx-[7px] flex"><Icon name="satellite" className="size-6" /></span>
          <span className="ml-[12px]">Échelle</span>
          <Combo label="Échelle" value="1:198294" white className="ml-[5px] h-8 w-[120px]" />
          <span className="ml-4 flex"><Icon name="lock" className="size-6" /></span>
          <span className="ml-[9px]">Loupe</span>
          <Spin label="Loupe" value="100%" className="ml-[3px] w-[127px]" />
          <span className="ml-[13px]">Rotation</span>
          <Spin label="Rotation" value="0,0 °" className="ml-[11px] w-[127px]" />
          <span className="ml-[9px]"><Check on text="Rendu" /></span>
          <span className="ml-[22px] flex"><Icon name="crs" className="size-[23px]" /></span>
          <span className="ml-1">EPSG:32188</span>
          <span className="ml-9 flex"><Icon name="chat" className="size-6" /></span>
        </div>
      </footer>

      <div className="grid h-[72px] shrink-0 grid-cols-[1fr_auto_1fr] items-center bg-[#dcdddd] pb-[3px]">
        <div className="flex items-center pl-[30px]">
          <span className="relative flex h-11 w-12">
            <svg viewBox="0 0 48 44" className="h-11 w-12">
              <path d="M2 16h11v6l-2 6-1-5-2 8-2-8-1 4-2-5z" fill="#7db4ee" />
              <path d="M18 18h8v10a8 8 0 1 1-8 0z" fill="#b9dcf8" />
              <circle cx="22" cy="34" r="5" fill="#1266c8" />
              <path d="M22 22v10" stroke="#2a9df0" strokeWidth="4" />
            </svg>
            <span className="absolute -top-1 left-3 flex h-6 items-center rounded-full bg-[#f7f7f7] px-1 text-[15px]">-10°</span>
          </span>
        </div>
        <div className="flex">
          {APPS.map((a) => (
            <button key={a.name} type="button" aria-label={a.name} className="flex w-[66px] justify-center">
              <span className={`relative flex h-[57px] w-14 items-center justify-center rounded-md ${a.active ? "border border-[#eee] bg-[#f1f1f1]" : ""}`}>
                {a.art}
                {a.dot && <span className="absolute bottom-0 h-[5px] w-[9px] rounded-full bg-[#777]" />}
                {a.active && <span className="absolute bottom-0 h-[5px] w-6 rounded-full bg-[#0a78d7]" />}
              </span>
            </button>
          ))}
        </div>
        <div className="flex items-center justify-end pr-[28px]">
          <svg viewBox="0 0 16 16" className="size-4"><path d="M1 12l7-8 7 8" fill="none" stroke="#222" strokeWidth="1.8" /></svg>
          <svg viewBox="0 0 24 24" className="ml-7 size-6">
            {p("M5 18a5 5 0 0 1 0-9c1-6 10-7 12-1 3 0 5 3 5 5l-4 5z", "#a9a9a9", "#555", 1.5)}
            {c(18, 18, 6, "#d92a2a")}
            {p("M15.700 15.700l4.600 4.600M20.300 15.700l-4.600 4.600", "none", "#fff", 1.5)}
          </svg>
          <span className="ml-6 w-11 text-center leading-[23px]">FRA<br />CAFR</span>
          <svg viewBox="0 0 24 24" className="ml-[22px] size-6">
            {p("M1 9c7-6.500 15-6.500 22 0M4.500 13c5-4.500 10-4.500 15 0M8 16.500c3-2.500 5-2.500 8 0", "none", "#222", 1.7)}
            {c(12, 20, 1.8, "#222")}
          </svg>
          <svg viewBox="0 0 24 24" className="ml-3 size-6">
            {p("M1 9h4l5-4.500v15L5 15H1zM14 9c1.500 2 1.500 4 0 6M17.500 6c3 4 3 8 0 12M20.500 4c4 5 4 11 0 16", "none", "#222", 1.5)}
          </svg>
          <svg viewBox="0 0 24 24" className="ml-3 size-6">
            {r(1, 6.5, 19, 12, "none", "#222", 1.5, 2.5)}
            {r(3.5, 9, 13, 7, "#222", "none", 0, 1)}
            {p("M22 10.500v4", "none", "#222", 2)}
          </svg>
          <span className="ml-[28px] text-right leading-[23px] whitespace-nowrap">17:16<br />2025-01-24</span>
        </div>
      </div>

      <div role="menu" aria-label="Menu de la couche" className={`${menuBox} top-[264px] left-[192px] w-[414px]`}>
        {CONTEXT.map((e, i) =>
          e ? <MenuRow key={i} e={e} /> : <hr key={i} className="mx-[6px] my-px h-px border-0 bg-[#bdbdbd]" />,
        )}
      </div>
      <div role="menu" aria-label="Exporter" className={`${menuBox} top-[855px] left-[605px] w-[538px]`}>
        {EXPORT.map((e) => <MenuRow key={e.t} e={e} />)}
      </div>
    </div>
  );
}
